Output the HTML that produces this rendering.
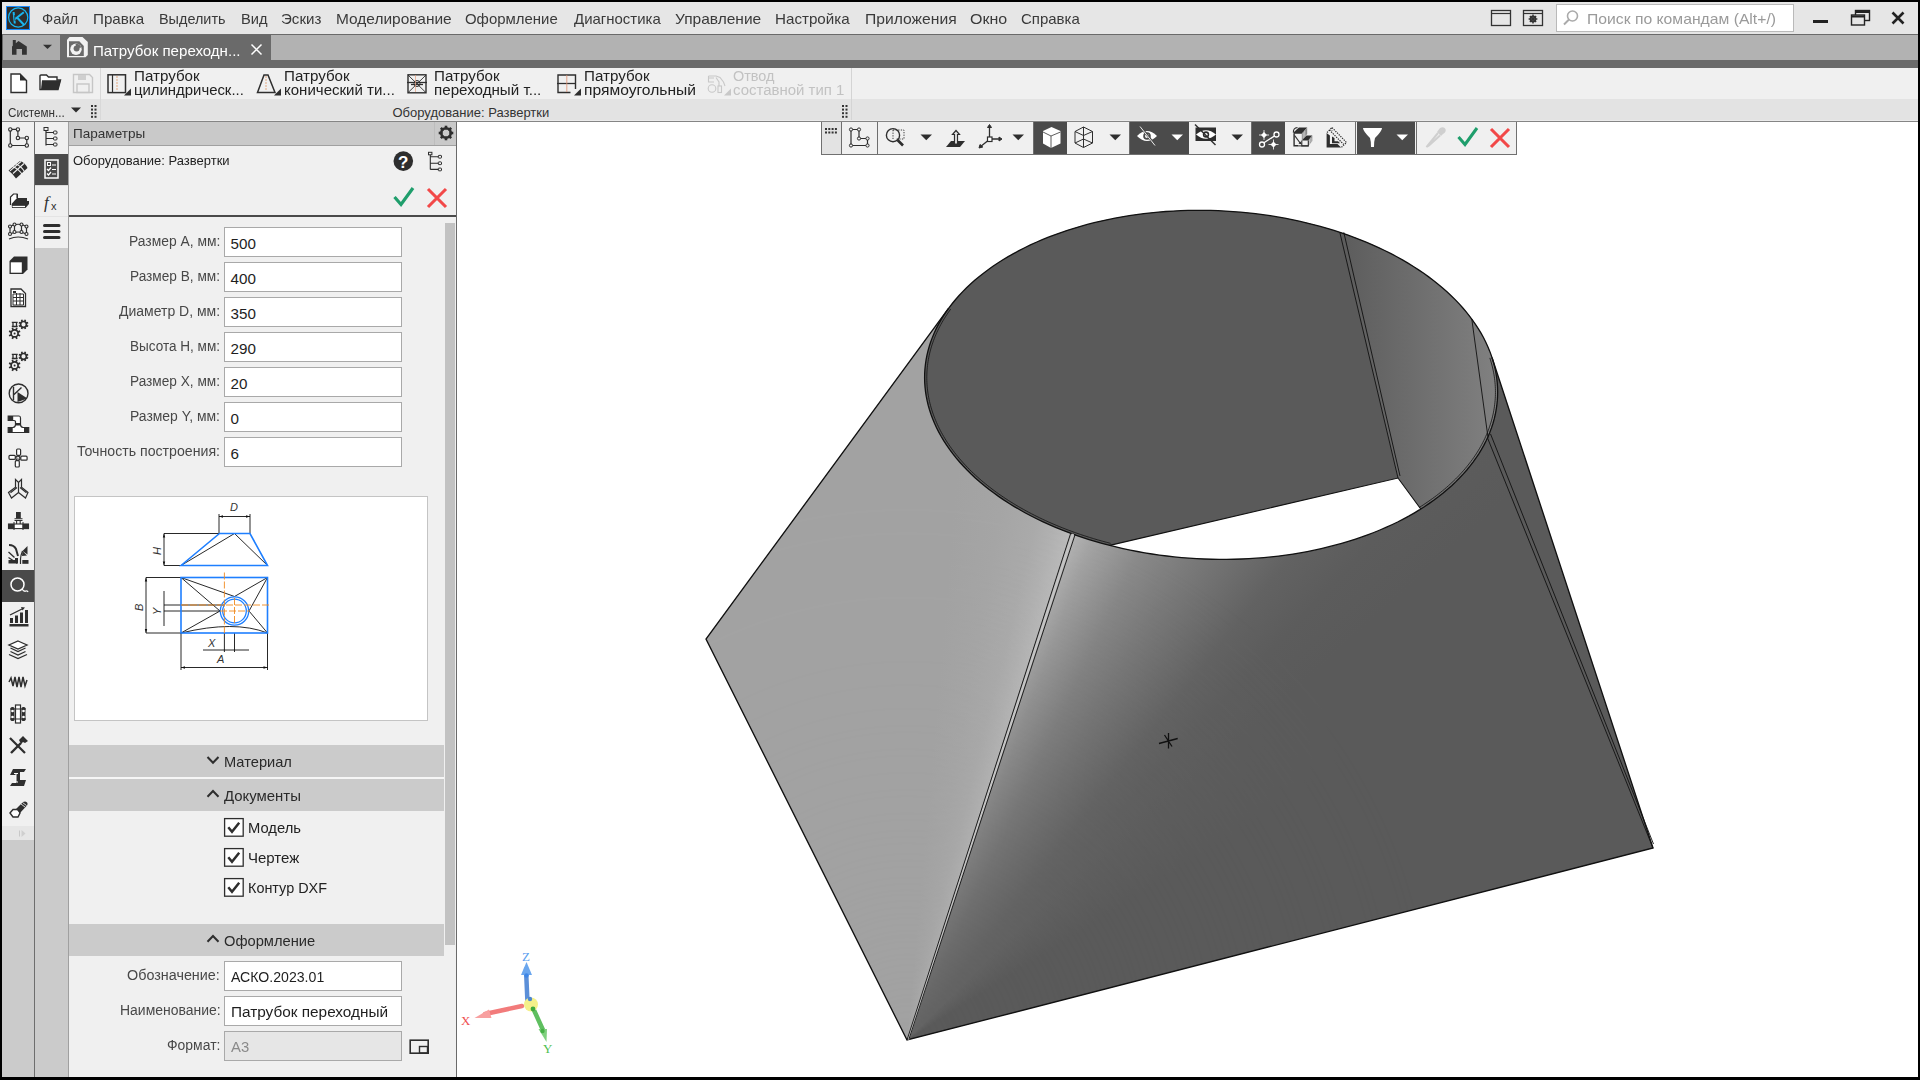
<!DOCTYPE html>
<html><head><meta charset="utf-8"><title>KOMPAS-3D</title>
<style>
html,body{margin:0;padding:0;width:1920px;height:1080px;overflow:hidden;background:#000;}
body{position:relative;font-family:"Liberation Sans",sans-serif;}
.t{position:absolute;white-space:nowrap;font-family:"Liberation Sans",sans-serif;}
svg{overflow:visible;}
</style></head><body>
<div style="position:absolute;left:0px;top:0px;width:1920px;height:1080px;background:#000;"></div>
<div style="position:absolute;left:2px;top:2px;width:1916px;height:32px;background:#e6e6e6;"></div>
<div style="position:absolute;left:2px;top:34px;width:1916px;height:34px;background:#6a6a6a;"></div>
<div style="position:absolute;left:3px;top:35px;width:57px;height:25px;background:#ababab;"></div>
<div style="position:absolute;left:271px;top:35px;width:1647px;height:25px;background:#b2b2b2;"></div>
<div style="position:absolute;left:2px;top:68px;width:1916px;height:31px;background:#f0f0f0;"></div>
<div style="position:absolute;left:2px;top:99px;width:1916px;height:22px;background:#e3e3e3;"></div>
<div style="position:absolute;left:2px;top:120px;width:1916px;height:1px;background:#ebebeb;"></div>
<div style="position:absolute;left:2px;top:121px;width:1916px;height:1px;background:#858585;"></div>
<div style="position:absolute;left:2px;top:122px;width:32px;height:704px;background:#f0f0f0;"></div>
<div style="position:absolute;left:2px;top:826px;width:32px;height:14px;background:#e6e6e6;"></div>
<div style="position:absolute;left:2px;top:840px;width:32px;height:237px;background:#cbcbcb;"></div>
<div style="position:absolute;left:2px;top:570px;width:32px;height:32px;background:#4a4a4a;"></div>
<div style="position:absolute;left:34px;top:122px;width:1px;height:955px;background:#6e6e6e;"></div>
<div style="position:absolute;left:35px;top:122px;width:33px;height:955px;background:#cbcbcb;"></div>
<div style="position:absolute;left:35px;top:122px;width:33px;height:126px;background:#f0f0f0;"></div>
<div style="position:absolute;left:35px;top:154px;width:33px;height:31px;background:#4a4a4a;"></div>
<div style="position:absolute;left:68px;top:122px;width:1px;height:955px;background:#a0a0a0;"></div>
<div style="position:absolute;left:69px;top:122px;width:387px;height:955px;background:#f0f0f0;"></div>
<div style="position:absolute;left:69px;top:122px;width:387px;height:23px;background:#c9c9c9;"></div>
<div style="position:absolute;left:69px;top:145px;width:387px;height:1px;background:#a0a0a0;"></div>
<div style="position:absolute;left:69px;top:216px;width:387px;height:1px;background:#555;"></div>
<div style="position:absolute;left:456px;top:122px;width:1px;height:955px;background:#6a6a6a;"></div>
<div style="position:absolute;left:457px;top:122px;width:1461px;height:955px;background:#ffffff;"></div>
<svg style="position:absolute;left:6px;top:6px;" width="24" height="24" viewBox="0 0 24 24"><rect x="0" y="0" width="24" height="24" fill="#1a8cff"/><rect x="1" y="1" width="22" height="22" fill="#2d2d2d"/><circle cx="12.2" cy="11.5" r="9.6" fill="none" stroke="#19b6f0" stroke-width="1.2"/><path d="M7.6 6 L8.8 17.5 M8.5 13.5 L17.8 6.2 M11 11.5 L18.2 19" stroke="#19b6f0" stroke-width="2" fill="none"/><path d="M8.3 9 L9 15" stroke="#2d2d2d" stroke-width="0.7"/></svg>
<div class="t" style="left:41.70px;top:11.52px;font-size:14.5px;line-height:14.5px;color:#3a3a3a;transform:scaleX(1.0155);transform-origin:0 0;">Файл</div>
<div class="t" style="left:92.50px;top:11.52px;font-size:14.5px;line-height:14.5px;color:#3a3a3a;transform:scaleX(1.0453);transform-origin:0 0;">Правка</div>
<div class="t" style="left:158.90px;top:11.52px;font-size:14.5px;line-height:14.5px;color:#3a3a3a;transform:scaleX(0.9941);transform-origin:0 0;">Выделить</div>
<div class="t" style="left:240.50px;top:11.52px;font-size:14.5px;line-height:14.5px;color:#3a3a3a;transform:scaleX(1.0102);transform-origin:0 0;">Вид</div>
<div class="t" style="left:280.90px;top:11.52px;font-size:14.5px;line-height:14.5px;color:#3a3a3a;transform:scaleX(1.0422);transform-origin:0 0;">Эскиз</div>
<div class="t" style="left:335.50px;top:11.52px;font-size:14.5px;line-height:14.5px;color:#3a3a3a;transform:scaleX(1.0664);transform-origin:0 0;">Моделирование</div>
<div class="t" style="left:465.20px;top:11.52px;font-size:14.5px;line-height:14.5px;color:#3a3a3a;transform:scaleX(1.0300);transform-origin:0 0;">Оформление</div>
<div class="t" style="left:574.00px;top:11.52px;font-size:14.5px;line-height:14.5px;color:#3a3a3a;transform:scaleX(1.0314);transform-origin:0 0;">Диагностика</div>
<div class="t" style="left:675.20px;top:11.52px;font-size:14.5px;line-height:14.5px;color:#3a3a3a;transform:scaleX(1.0694);transform-origin:0 0;">Управление</div>
<div class="t" style="left:775.40px;top:11.52px;font-size:14.5px;line-height:14.5px;color:#3a3a3a;transform:scaleX(1.0465);transform-origin:0 0;">Настройка</div>
<div class="t" style="left:864.70px;top:11.52px;font-size:14.5px;line-height:14.5px;color:#3a3a3a;transform:scaleX(1.0809);transform-origin:0 0;">Приложения</div>
<div class="t" style="left:970.10px;top:11.52px;font-size:14.5px;line-height:14.5px;color:#3a3a3a;transform:scaleX(1.1040);transform-origin:0 0;">Окно</div>
<div class="t" style="left:1020.80px;top:11.52px;font-size:14.5px;line-height:14.5px;color:#3a3a3a;transform:scaleX(1.0337);transform-origin:0 0;">Справка</div>
<svg style="position:absolute;left:1490px;top:9px;" width="22" height="18" viewBox="0 0 22 18"><rect x="1.5" y="1.5" width="19" height="15" fill="none" stroke="#333" stroke-width="1.3"/><line x1="1.5" y1="4.5" x2="20.5" y2="4.5" stroke="#333" stroke-width="1.2"/></svg>
<svg style="position:absolute;left:1522px;top:9px;" width="22" height="18" viewBox="0 0 22 18"><rect x="1.5" y="1.5" width="19" height="15" fill="none" stroke="#333" stroke-width="1.3"/><line x1="1.5" y1="4.5" x2="20.5" y2="4.5" stroke="#333" stroke-width="1.2"/><circle cx="11" cy="10" r="2.6" fill="none" stroke="#333" stroke-width="1.6"/><g stroke="#333" stroke-width="1.4"><line x1="11" y1="5.6" x2="11" y2="14.4"/><line x1="6.6" y1="10" x2="15.4" y2="10"/><line x1="7.9" y1="6.9" x2="14.1" y2="13.1"/><line x1="14.1" y1="6.9" x2="7.9" y2="13.1"/></g></svg>
<div style="position:absolute;left:1556px;top:4px;width:238px;height:28px;background:#ffffff;border:1px solid #b9b9b9;box-sizing:border-box;"></div>
<svg style="position:absolute;left:1562px;top:9px;" width="18" height="18" viewBox="0 0 18 18"><circle cx="10.5" cy="7" r="5" fill="none" stroke="#aaa" stroke-width="1.6"/><line x1="7" y1="10.5" x2="2" y2="15.5" stroke="#aaa" stroke-width="2"/></svg>
<div class="t" style="left:1587.00px;top:11.72px;font-size:14.5px;line-height:14.5px;color:#9a9a9a;transform:scaleX(1.0840);transform-origin:0 0;">Поиск по командам (Alt+/)</div>
<div style="position:absolute;left:1813px;top:20px;width:15px;height:3px;background:#222;"></div>
<svg style="position:absolute;left:1850px;top:9px;" width="22" height="18" viewBox="0 0 22 18"><rect x="5.5" y="1.5" width="14" height="10" fill="none" stroke="#222" stroke-width="1.4"/><line x1="5.5" y1="3" x2="19.5" y2="3" stroke="#222" stroke-width="2"/><rect x="1.5" y="6" width="13" height="10" fill="#e6e6e6" stroke="#222" stroke-width="1.4"/><line x1="1.5" y1="7.5" x2="14.5" y2="7.5" stroke="#222" stroke-width="2"/></svg>
<svg style="position:absolute;left:1890px;top:10px;" width="16" height="16" viewBox="0 0 16 16"><path d="M2.5 2.5 L13.5 13.5 M13.5 2.5 L2.5 13.5" stroke="#222" stroke-width="2.6"/></svg>
<svg style="position:absolute;left:0px;top:0px;" width="100" height="70" viewBox="0 0 100 70"><path d="M12 54.8 V46.5 L12.8 45.8 V40 H15.8 V43.2 L18.5 41 L26.8 46.5 V54.8 H22 V49 H16.5 V54.8 Z" fill="#333"/><path d="M43 44.8 H52 L47.5 48.9 Z" fill="#333"/><path d="M69.5 37 H82.5 L87.8 42 V55 L85.5 57.3 H67 V39.8 Z" fill="#f2f2f2"/><path d="M69 41.3 H79.3 L83.8 46 V56 H69 Z" fill="#6a6a6a"/><circle cx="76" cy="49.2" r="5.7" fill="#f2f2f2"/><circle cx="76.6" cy="48.4" r="3" fill="#6a6a6a"/><path d="M76.5 48.5 L75.5 43.8 A5.4 5.4 0 0 1 81.2 47.5 Z" fill="#6a6a6a"/></svg>
<div class="t" style="left:93.00px;top:43.52px;font-size:14.5px;line-height:14.5px;color:#ffffff;transform:scaleX(1.0389);transform-origin:0 0;">Патрубок переходн...</div>
<svg style="position:absolute;left:250px;top:43px;" width="13" height="13" viewBox="0 0 13 13"><path d="M1.5 1.5 L11.5 11.5 M11.5 1.5 L1.5 11.5" stroke="#fff" stroke-width="1.5"/></svg>
<div style="position:absolute;left:100px;top:68px;width:1px;height:52px;background:#d8d8d8;"></div>
<div style="position:absolute;left:851px;top:68px;width:1px;height:52px;background:#d4d4d4;"></div>
<svg style="position:absolute;left:10px;top:73px;" width="18" height="21" viewBox="0 0 18 21"><path d="M1 1 H10 L16.5 7.5 V19.5 H1 Z" fill="#fff" stroke="#2e2e2e" stroke-width="1.4"/><path d="M10 1 V7.5 H16.5 Z" fill="#2e2e2e"/></svg>
<svg style="position:absolute;left:39px;top:74px;" width="23" height="17" viewBox="0 0 23 17"><path d="M1 15.5 V2 Q1 1 2 1 H7.5 L9.5 3 H18 V6 H21.5 L19 15.5 Z" fill="#fff" stroke="#2e2e2e" stroke-width="1.4"/><path d="M2 15.5 L3 6.2 H21.8 L19.2 15.5 Z" fill="#2e2e2e"/></svg>
<svg style="position:absolute;left:72px;top:73px;" width="22" height="21" viewBox="0 0 22 21"><path d="M1.5 1.5 H17.5 L20.5 4.5 V19.5 H1.5 Z" fill="none" stroke="#c6c6c6" stroke-width="1.4"/><rect x="6" y="2" width="8" height="5" fill="#cfcfcf"/><rect x="5" y="11" width="12" height="8.5" fill="none" stroke="#c6c6c6" stroke-width="1.4"/></svg>
<svg style="position:absolute;left:106px;top:73px;" width="22" height="21" viewBox="0 0 22 21"><rect x="2" y="1.8" width="17.5" height="17.8" fill="none" stroke="#2e2e2e" stroke-width="1.5"/><line x1="6.5" y1="2" x2="6.5" y2="19.5" stroke="#2e2e2e" stroke-width="1.2"/><line x1="11" y1="3" x2="11" y2="18" stroke="#e08a50" stroke-width="0.7" stroke-dasharray="2 1"/></svg>
<svg style="position:absolute;left:123px;top:88px;" width="9" height="8" viewBox="0 0 9 8"><path d="M8 0.5 V7.5 H1 Z" fill="#2e2e2e"/></svg>
<div class="t" style="left:133.60px;top:68.95px;font-size:14px;line-height:14px;color:#222;transform:scaleX(1.0813);transform-origin:0 0;">Патрубок</div>
<div class="t" style="left:133.60px;top:82.75px;font-size:14px;line-height:14px;color:#222;transform:scaleX(1.0639);transform-origin:0 0;">цилиндрическ...</div>
<svg style="position:absolute;left:256px;top:73px;" width="22" height="21" viewBox="0 0 22 21"><path d="M8 2 H12 L19 19.5 H1.5 Z" fill="none" stroke="#2e2e2e" stroke-width="1.5"/><line x1="10" y1="3" x2="10" y2="18" stroke="#e08a50" stroke-width="0.7" stroke-dasharray="2 1"/></svg>
<svg style="position:absolute;left:273px;top:88px;" width="9" height="8" viewBox="0 0 9 8"><path d="M8 0.5 V7.5 H1 Z" fill="#2e2e2e"/></svg>
<div class="t" style="left:283.60px;top:68.95px;font-size:14px;line-height:14px;color:#222;transform:scaleX(1.0813);transform-origin:0 0;">Патрубок</div>
<div class="t" style="left:283.60px;top:82.75px;font-size:14px;line-height:14px;color:#222;transform:scaleX(1.0740);transform-origin:0 0;">конический ти...</div>
<svg style="position:absolute;left:406px;top:73px;" width="22" height="21" viewBox="0 0 22 21"><rect x="2" y="1.8" width="18" height="18" fill="none" stroke="#2e2e2e" stroke-width="1.4"/><path d="M2 2 L20 19.7 M20 2 L2 19.7" stroke="#2e2e2e" stroke-width="0.9"/><line x1="1" y1="9.5" x2="21" y2="9.5" stroke="#2e2e2e" stroke-width="1.3"/><line x1="5" y1="11.5" x2="17" y2="11.5" stroke="#2e2e2e" stroke-width="1.3"/><circle cx="11" cy="10.5" r="3" fill="none" stroke="#2e2e2e" stroke-width="1"/><line x1="9.5" y1="2" x2="9.5" y2="19" stroke="#e8a080" stroke-width="0.7"/></svg>
<div class="t" style="left:434.20px;top:68.95px;font-size:14px;line-height:14px;color:#222;transform:scaleX(1.0813);transform-origin:0 0;">Патрубок</div>
<div class="t" style="left:434.20px;top:82.75px;font-size:14px;line-height:14px;color:#222;transform:scaleX(1.0821);transform-origin:0 0;">переходный т...</div>
<svg style="position:absolute;left:556px;top:73px;" width="22" height="21" viewBox="0 0 22 21"><path d="M19.5 16 V2 H2 V19.5 H14.5" fill="none" stroke="#2e2e2e" stroke-width="1.4"/><line x1="1" y1="10.5" x2="20" y2="10.5" stroke="#2e2e2e" stroke-width="1.3"/><line x1="10.8" y1="2" x2="10.8" y2="19" stroke="#e09070" stroke-width="0.8"/></svg>
<svg style="position:absolute;left:573px;top:88px;" width="9" height="8" viewBox="0 0 9 8"><path d="M8 0.5 V7.5 H1 Z" fill="#2e2e2e"/></svg>
<div class="t" style="left:583.60px;top:68.95px;font-size:14px;line-height:14px;color:#222;transform:scaleX(1.0813);transform-origin:0 0;">Патрубок</div>
<div class="t" style="left:583.60px;top:82.75px;font-size:14px;line-height:14px;color:#222;transform:scaleX(1.1155);transform-origin:0 0;">прямоугольный</div>
<svg style="position:absolute;left:706px;top:73px;" width="22" height="21" viewBox="0 0 22 21"><path d="M2.5 3 H10 L14 4.5 L17.5 9 L19 13 M2 5 H8 M2.5 3 V9 H8 M10 4.5 L13 9 V13" fill="none" stroke="#c8c8c8" stroke-width="1.1"/><circle cx="6" cy="15.5" r="3.8" fill="none" stroke="#c8c8c8" stroke-width="1.1"/><rect x="12" y="13" width="3.5" height="6.5" fill="none" stroke="#c8c8c8" stroke-width="1.1"/></svg>
<svg style="position:absolute;left:723px;top:88px;" width="9" height="8" viewBox="0 0 9 8"><path d="M8 0.5 V7.5 H1 Z" fill="#c8c8c8"/></svg>
<div class="t" style="left:732.90px;top:68.95px;font-size:14px;line-height:14px;color:#c2c2c2;transform:scaleX(1.0316);transform-origin:0 0;">Отвод</div>
<div class="t" style="left:732.90px;top:82.75px;font-size:14px;line-height:14px;color:#c2c2c2;transform:scaleX(1.0697);transform-origin:0 0;">составной тип 1</div>
<div class="t" style="left:7.70px;top:105.79px;font-size:13px;line-height:13px;color:#333;transform:scaleX(0.8996);transform-origin:0 0;">Системн...</div>
<svg style="position:absolute;left:70px;top:107px;" width="12" height="7" viewBox="0 0 12 7"><path d="M1 0.5 H11 L6 5.5 Z" fill="#2e2e2e"/></svg>
<svg style="position:absolute;left:91px;top:103.5px;" width="6" height="16" viewBox="0 0 6 16"><rect x="0" y="1.0" width="2" height="2" fill="#333"/><rect x="3.5" y="1.0" width="2" height="2" fill="#333"/><rect x="0" y="4.6" width="2" height="2" fill="#333"/><rect x="3.5" y="4.6" width="2" height="2" fill="#333"/><rect x="0" y="8.2" width="2" height="2" fill="#333"/><rect x="3.5" y="8.2" width="2" height="2" fill="#333"/><rect x="0" y="11.8" width="2" height="2" fill="#333"/><rect x="3.5" y="11.8" width="2" height="2" fill="#333"/></svg>
<div class="t" style="left:392.50px;top:105.79px;font-size:13px;line-height:13px;color:#333;">Оборудование: Развертки</div>
<svg style="position:absolute;left:842px;top:103.5px;" width="6" height="16" viewBox="0 0 6 16"><rect x="0" y="1.0" width="2" height="2" fill="#333"/><rect x="3.5" y="1.0" width="2" height="2" fill="#333"/><rect x="0" y="4.6" width="2" height="2" fill="#333"/><rect x="3.5" y="4.6" width="2" height="2" fill="#333"/><rect x="0" y="8.2" width="2" height="2" fill="#333"/><rect x="3.5" y="8.2" width="2" height="2" fill="#333"/><rect x="0" y="11.8" width="2" height="2" fill="#333"/><rect x="3.5" y="11.8" width="2" height="2" fill="#333"/></svg>
<svg style="position:absolute;left:2px;top:122px;" width="32" height="32" viewBox="0 0 32 32"><path d="M8.3 7.4 H15.9 V16 H24.8 V23.5 H8.3 Z" fill="none" stroke="#2e2e2e" stroke-width="1.2"/><circle cx="8.3" cy="7.4" r="1.7" fill="#f0f0f0" stroke="#2e2e2e" stroke-width="1.1"/><circle cx="15.9" cy="7.4" r="1.7" fill="#f0f0f0" stroke="#2e2e2e" stroke-width="1.1"/><circle cx="15.9" cy="16" r="1.7" fill="#f0f0f0" stroke="#2e2e2e" stroke-width="1.1"/><circle cx="24.8" cy="16" r="1.7" fill="#f0f0f0" stroke="#2e2e2e" stroke-width="1.1"/><circle cx="24.8" cy="23.5" r="1.7" fill="#f0f0f0" stroke="#2e2e2e" stroke-width="1.1"/><circle cx="8.3" cy="23.5" r="1.7" fill="#f0f0f0" stroke="#2e2e2e" stroke-width="1.1"/></svg>
<svg style="position:absolute;left:2px;top:154px;" width="32" height="32" viewBox="0 0 32 32"><path d="M6.5 16.5 L18 7 Q23 8.5 25.5 14 L14 24.5 Q11 20 6.5 16.5 Z" fill="#2e2e2e"/><path d="M10.5 12.5 Q17 15 20.5 21 M13.5 9.7 Q20 12.5 23 18.5 M11 19.5 L22 9.5 M8 16.8 L19 7.5" stroke="#f0f0f0" stroke-width="1.1" fill="none"/></svg>
<svg style="position:absolute;left:2px;top:186px;" width="32" height="32" viewBox="0 0 32 32"><path d="M9 11 L12 8 H16 V12 H25 V15 H27 V18 L23.5 22 H10 Z" fill="#2e2e2e"/><path d="M8.5 19 V11 L11.5 8 H15 V12" fill="#fff" stroke="#2e2e2e" stroke-width="1.2"/><path d="M10.5 20.5 H23" stroke="#fff" stroke-width="1.3"/></svg>
<svg style="position:absolute;left:2px;top:218px;" width="32" height="32" viewBox="0 0 32 32"><path d="M8 8.5 Q16 4 24.5 8.5 M8 8.5 V16 M24.5 8.5 V16 M12.5 6.5 V14 M19.5 6.5 V14 M8 16 Q16 12 24.5 16 M7 21 Q16 17 26 21" fill="none" stroke="#2e2e2e" stroke-width="1.2"/><circle cx="8" cy="8.5" r="1.5" fill="#f0f0f0" stroke="#2e2e2e" stroke-width="1.1"/><circle cx="12.5" cy="6.5" r="1.5" fill="#f0f0f0" stroke="#2e2e2e" stroke-width="1.1"/><circle cx="19.5" cy="6.5" r="1.5" fill="#f0f0f0" stroke="#2e2e2e" stroke-width="1.1"/><circle cx="24.5" cy="8.5" r="1.5" fill="#f0f0f0" stroke="#2e2e2e" stroke-width="1.1"/><circle cx="8" cy="16" r="1.5" fill="#f0f0f0" stroke="#2e2e2e" stroke-width="1.1"/><circle cx="24.5" cy="16" r="1.5" fill="#f0f0f0" stroke="#2e2e2e" stroke-width="1.1"/><circle cx="12.5" cy="14" r="1.5" fill="#f0f0f0" stroke="#2e2e2e" stroke-width="1.1"/><circle cx="19.5" cy="14" r="1.5" fill="#f0f0f0" stroke="#2e2e2e" stroke-width="1.1"/></svg>
<svg style="position:absolute;left:2px;top:250px;" width="32" height="32" viewBox="0 0 32 32"><path d="M7.5 11 L12 6.5 H25.5 V19.5 L21 24 H7.5 Z" fill="#2e2e2e"/><rect x="8.8" y="12.3" width="11" height="10.4" fill="#fff"/></svg>
<svg style="position:absolute;left:2px;top:282px;" width="32" height="32" viewBox="0 0 32 32"><path d="M9 7 H19 L23.5 11.5 V24.5 H9 Z" fill="#fff" stroke="#2e2e2e" stroke-width="1.3"/><rect x="11" y="9" width="3" height="2" fill="#2e2e2e"/><path d="M11 12 H21.5 V23 H11 Z M11 15.5 H21.5 M11 19 H21.5 M14.5 11 V23 M18 11 V23" fill="none" stroke="#2e2e2e" stroke-width="1"/></svg>
<svg style="position:absolute;left:2px;top:314px;" width="32" height="32" viewBox="0 0 32 32"><path d="M9.8 8.3 H15.7 M9.8 12.5 H15.7 M11 8.3 V12.5 M14.5 8.3 V12.5" stroke="#2e2e2e" stroke-width="1.3"/><line x1="24.04" y1="11.45" x2="26.12" y2="12.31" stroke="#2e2e2e" stroke-width="1.7"/><line x1="22.55" y1="12.94" x2="23.41" y2="15.02" stroke="#2e2e2e" stroke-width="1.7"/><line x1="20.45" y1="12.94" x2="19.59" y2="15.02" stroke="#2e2e2e" stroke-width="1.7"/><line x1="18.96" y1="11.45" x2="16.88" y2="12.31" stroke="#2e2e2e" stroke-width="1.7"/><line x1="18.96" y1="9.35" x2="16.88" y2="8.49" stroke="#2e2e2e" stroke-width="1.7"/><line x1="20.45" y1="7.86" x2="19.59" y2="5.78" stroke="#2e2e2e" stroke-width="1.7"/><line x1="22.55" y1="7.86" x2="23.41" y2="5.78" stroke="#2e2e2e" stroke-width="1.7"/><line x1="24.04" y1="9.35" x2="26.12" y2="8.49" stroke="#2e2e2e" stroke-width="1.7"/><circle cx="21.5" cy="10.4" r="2.90" fill="#f0f0f0" stroke="#2e2e2e" stroke-width="1.7"/><line x1="15.65" y1="20.66" x2="18.14" y2="21.70" stroke="#2e2e2e" stroke-width="1.7"/><line x1="13.86" y1="22.45" x2="14.90" y2="24.94" stroke="#2e2e2e" stroke-width="1.7"/><line x1="11.34" y1="22.45" x2="10.30" y2="24.94" stroke="#2e2e2e" stroke-width="1.7"/><line x1="9.55" y1="20.66" x2="7.06" y2="21.70" stroke="#2e2e2e" stroke-width="1.7"/><line x1="9.55" y1="18.14" x2="7.06" y2="17.10" stroke="#2e2e2e" stroke-width="1.7"/><line x1="11.34" y1="16.35" x2="10.30" y2="13.86" stroke="#2e2e2e" stroke-width="1.7"/><line x1="13.86" y1="16.35" x2="14.90" y2="13.86" stroke="#2e2e2e" stroke-width="1.7"/><line x1="15.65" y1="18.14" x2="18.14" y2="17.10" stroke="#2e2e2e" stroke-width="1.7"/><circle cx="12.6" cy="19.4" r="3.48" fill="#f0f0f0" stroke="#2e2e2e" stroke-width="1.7"/><circle cx="12.6" cy="19.4" r="1" fill="#2e2e2e"/></svg>
<svg style="position:absolute;left:2px;top:346px;" width="32" height="32" viewBox="0 0 32 32"><path d="M9.8 8.3 H15.7 M9.8 12.5 H15.7 M11 8.3 V12.5 M14.5 8.3 V12.5" stroke="#2e2e2e" stroke-width="1.3"/><line x1="24.04" y1="11.45" x2="26.12" y2="12.31" stroke="#2e2e2e" stroke-width="1.7"/><line x1="22.55" y1="12.94" x2="23.41" y2="15.02" stroke="#2e2e2e" stroke-width="1.7"/><line x1="20.45" y1="12.94" x2="19.59" y2="15.02" stroke="#2e2e2e" stroke-width="1.7"/><line x1="18.96" y1="11.45" x2="16.88" y2="12.31" stroke="#2e2e2e" stroke-width="1.7"/><line x1="18.96" y1="9.35" x2="16.88" y2="8.49" stroke="#2e2e2e" stroke-width="1.7"/><line x1="20.45" y1="7.86" x2="19.59" y2="5.78" stroke="#2e2e2e" stroke-width="1.7"/><line x1="22.55" y1="7.86" x2="23.41" y2="5.78" stroke="#2e2e2e" stroke-width="1.7"/><line x1="24.04" y1="9.35" x2="26.12" y2="8.49" stroke="#2e2e2e" stroke-width="1.7"/><circle cx="21.5" cy="10.4" r="2.90" fill="#f0f0f0" stroke="#2e2e2e" stroke-width="1.7"/><line x1="15.65" y1="20.66" x2="18.14" y2="21.70" stroke="#2e2e2e" stroke-width="1.7"/><line x1="13.86" y1="22.45" x2="14.90" y2="24.94" stroke="#2e2e2e" stroke-width="1.7"/><line x1="11.34" y1="22.45" x2="10.30" y2="24.94" stroke="#2e2e2e" stroke-width="1.7"/><line x1="9.55" y1="20.66" x2="7.06" y2="21.70" stroke="#2e2e2e" stroke-width="1.7"/><line x1="9.55" y1="18.14" x2="7.06" y2="17.10" stroke="#2e2e2e" stroke-width="1.7"/><line x1="11.34" y1="16.35" x2="10.30" y2="13.86" stroke="#2e2e2e" stroke-width="1.7"/><line x1="13.86" y1="16.35" x2="14.90" y2="13.86" stroke="#2e2e2e" stroke-width="1.7"/><line x1="15.65" y1="18.14" x2="18.14" y2="17.10" stroke="#2e2e2e" stroke-width="1.7"/><circle cx="12.6" cy="19.4" r="3.48" fill="#f0f0f0" stroke="#2e2e2e" stroke-width="1.7"/><circle cx="12.6" cy="19.4" r="1" fill="#2e2e2e"/></svg>
<svg style="position:absolute;left:2px;top:378px;" width="32" height="32" viewBox="0 0 32 32"><circle cx="16.6" cy="15.4" r="9.4" fill="none" stroke="#2e2e2e" stroke-width="1.4"/><path d="M11.5 9 V22 M11.5 17 L19.5 9.5" stroke="#2e2e2e" stroke-width="1.4" fill="none"/><path d="M15.5 14 L25.5 20.5 L15.5 24 Z" fill="#2e2e2e"/></svg>
<svg style="position:absolute;left:2px;top:410px;" width="32" height="32" viewBox="0 0 32 32"><path d="M6.2 6 H17 Q18.5 6 18.5 8 V14.5 Q18.5 17 21 17.5 H26.7 V22.5 H6.2 V17.5 H11 Q13.5 17 13.5 14.5 V11.5 Q13.5 10.5 12 10.5 H6.2 Z" fill="#fff" stroke="#2e2e2e" stroke-width="1.2"/><rect x="6.2" y="6" width="5" height="4.5" fill="#2e2e2e"/><rect x="6.2" y="17.5" width="4.5" height="5" fill="#2e2e2e"/><rect x="22" y="17.5" width="4.7" height="5" fill="#2e2e2e"/><rect x="13.5" y="13" width="5" height="2.5" fill="#2e2e2e"/></svg>
<svg style="position:absolute;left:2px;top:442px;" width="32" height="32" viewBox="0 0 32 32"><g fill="#fff" stroke="#2e2e2e" stroke-width="1.2"><rect x="14.6" y="7" width="4" height="6.3" rx="1"/><rect x="7" y="13.3" width="6.3" height="4" rx="1"/><rect x="18.8" y="14.2" width="6.3" height="4" rx="1"/><rect x="13.3" y="18.7" width="4" height="6.3" rx="1"/><circle cx="15.9" cy="16.2" r="2"/></g><circle cx="15.9" cy="16.2" r="0.6" fill="#2e2e2e"/></svg>
<svg style="position:absolute;left:2px;top:474px;" width="32" height="32" viewBox="0 0 32 32"><g fill="none" stroke="#2e2e2e" stroke-width="1.2"><path d="M13.5 5.5 V13.3 L6.5 18.5 L9.5 24 L16.5 18.5 L23.5 24 L26 18.5 L19.5 13.3 V5.5 L16.5 8.5 Z"/><path d="M16.5 8.5 V18.5 M15 13.5 L8.5 18.8 M18 13.5 L24.5 18.8"/></g></svg>
<svg style="position:absolute;left:2px;top:506px;" width="32" height="32" viewBox="0 0 32 32"><rect x="14" y="6" width="4.8" height="6.5" fill="#2e2e2e"/><path d="M12.5 12.8 H20.5 M12.5 14.5 H20.5" stroke="#2e2e2e" stroke-width="1.1"/><path d="M14.6 14.5 V18 M18.2 14.5 V18" stroke="#2e2e2e" stroke-width="1.1"/><rect x="6.5" y="18" width="20" height="4.6" fill="#fff" stroke="#2e2e2e" stroke-width="1.1"/><rect x="6.5" y="18" width="6" height="4.6" fill="#2e2e2e"/><rect x="20.5" y="18" width="6" height="4.6" fill="#2e2e2e"/><path d="M12 16 V24 M21 16 V24" stroke="#2e2e2e" stroke-width="1"/></svg>
<svg style="position:absolute;left:2px;top:538px;" width="32" height="32" viewBox="0 0 32 32"><path d="M7 7 Q12 7 14 11 L16 18" stroke="#2e2e2e" stroke-width="2" fill="none"/><path d="M6.5 14 L12.5 19.5 M6.5 19.5 L15.5 25.5" stroke="#2e2e2e" stroke-width="1.3"/><path d="M6.5 22 H13 L15.5 25.5 H6.5 Z" fill="#2e2e2e"/><path d="M25.5 8 V16.5 L20.5 13 Z" fill="#2e2e2e"/><path d="M20.5 13 L25 17.5 L20 18 Z" fill="#2e2e2e"/><rect x="20.3" y="22" width="6.2" height="3.8" fill="#2e2e2e"/><path d="M18.5 26 V21 Q18.5 18 20.5 13" stroke="#2e2e2e" stroke-width="1.2" fill="none"/><rect x="13" y="20" width="3" height="5" fill="#2e2e2e"/></svg>
<svg style="position:absolute;left:2px;top:570px;" width="32" height="32" viewBox="0 0 32 32"><circle cx="15.5" cy="14.5" r="6.5" fill="none" stroke="#fff" stroke-width="1.5"/><path d="M20 19 Q22 22 24 21 Q25.5 20.5 26 22" stroke="#fff" stroke-width="1.3" fill="none"/></svg>
<svg style="position:absolute;left:2px;top:602px;" width="32" height="32" viewBox="0 0 32 32"><path d="M8 16 V21 H11 V16 Z M13 13.5 V21 H16 V13.5 Z M18 10.5 V21 H21 V10.5 Z M23 8 V21 H26 V8 Z" fill="#2e2e2e"/><rect x="7.5" y="22" width="19" height="2.5" fill="#2e2e2e"/><path d="M8 13 L21 6.5" stroke="#2e2e2e" stroke-width="1.3"/><path d="M19 5 L23 5.5 L20.5 8.5 Z" fill="#2e2e2e"/></svg>
<svg style="position:absolute;left:2px;top:634px;" width="32" height="32" viewBox="0 0 32 32"><path d="M16 7 L25 11 L16 15 L7 11 Z" fill="#fff" stroke="#2e2e2e" stroke-width="1.3"/><path d="M8.5 14 L16 17.5 L23.5 14 M8.5 17.5 L16 21 L23.5 17.5 M7 20.5 L16 24.5 L25 20.5" fill="none" stroke="#2e2e2e" stroke-width="1.3"/></svg>
<svg style="position:absolute;left:2px;top:666px;" width="32" height="32" viewBox="0 0 32 32"><path d="M7 16 L9 12 L11 20 L13 11 L15 21 L17 11 L19 21 L21 11 L23 20 L25 14" fill="none" stroke="#2e2e2e" stroke-width="1.5"/></svg>
<svg style="position:absolute;left:2px;top:698px;" width="32" height="32" viewBox="0 0 32 32"><path d="M9 8 H23 V24 H9 Z" fill="none" stroke="#2e2e2e" stroke-width="0"/><rect x="8.5" y="9" width="4" height="14" rx="1.5" fill="#2e2e2e"/><rect x="19.5" y="9" width="4" height="14" rx="1.5" fill="#2e2e2e"/><rect x="13.5" y="7" width="5" height="18" fill="#fff" stroke="#2e2e2e" stroke-width="1.2"/><circle cx="10.5" cy="13" r="1.3" fill="#fff"/><circle cx="10.5" cy="19" r="1.3" fill="#fff"/><circle cx="21.5" cy="13" r="1.3" fill="#fff"/><circle cx="21.5" cy="19" r="1.3" fill="#fff"/><path d="M8 11 H24 M8 21 H24" stroke="#2e2e2e" stroke-width="1.2"/></svg>
<svg style="position:absolute;left:2px;top:730px;" width="32" height="32" viewBox="0 0 32 32"><path d="M8 8 L23 23" stroke="#2e2e2e" stroke-width="2.2"/><path d="M9 23 L19 13" stroke="#2e2e2e" stroke-width="2.4"/><path d="M17 10 L21 6 L26 11 L23 13 L21 12 L19 14 Z" fill="#2e2e2e"/></svg>
<svg style="position:absolute;left:2px;top:762px;" width="32" height="32" viewBox="0 0 32 32"><path d="M11 7 H24 L22 10 H18 V18 H24 L22 24 H8 L10 21 H14 V13 H8 Z" fill="#2e2e2e"/><path d="M12 11.5 H16 M12 20 H16 M14 11.5 V20" stroke="#fff" stroke-width="1"/></svg>
<svg style="position:absolute;left:2px;top:794px;" width="32" height="32" viewBox="0 0 32 32"><path d="M8 19 L11 15.5 H16 L18 19 L16 23 H11 Z" fill="#fff" stroke="#2e2e2e" stroke-width="1.4"/><path d="M14 15 L21 8 Q24 6.5 25.5 9 Q26 11 24 12.5 L18 19" fill="#2e2e2e"/><path d="M19 10 L23 13 M20.5 8.5 L24.5 11.5" stroke="#fff" stroke-width="0.8"/></svg>
<svg style="position:absolute;left:18px;top:829px;" width="10" height="10" viewBox="0 0 10 10"><rect x="1" y="1.5" width="1" height="6" fill="#c8c8c8"/><path d="M3.5 1 L7.5 4.5 L3.5 8 Z" fill="#cfcfcf"/></svg>
<svg style="position:absolute;left:35px;top:122px;" width="33" height="32" viewBox="0 0 33 32"><path d="M11 6.5 V23.5 M11 10.5 H19 M11 16.5 H19 M11 22.5 H19" stroke="#2e2e2e" stroke-width="1.2" fill="none"/><rect x="9" y="5.5" width="4" height="3" fill="#f0f0f0" stroke="#2e2e2e" stroke-width="1"/><rect x="18.5" y="9" width="3.5" height="3" rx="1" fill="#f0f0f0" stroke="#2e2e2e" stroke-width="1"/><rect x="18.5" y="15" width="3.5" height="3" rx="1" fill="#f0f0f0" stroke="#2e2e2e" stroke-width="1"/><rect x="18.5" y="21" width="3.5" height="3" rx="1" fill="#f0f0f0" stroke="#2e2e2e" stroke-width="1"/></svg>
<svg style="position:absolute;left:35px;top:154px;" width="33" height="32" viewBox="0 0 33 32"><rect x="10" y="6" width="13" height="18" fill="none" stroke="#fff" stroke-width="1.5"/><rect x="12.5" y="8.5" width="3" height="3" fill="none" stroke="#fff" stroke-width="1"/><path d="M17 11 H21 M17 15.5 H21 M17 20 H21" stroke="#fff" stroke-width="1"/><path d="M12 15 L13.5 16.5 L16 13.5 M12 19.5 L13.5 21 L16 18" stroke="#fff" stroke-width="1.2" fill="none"/></svg>
<svg style="position:absolute;left:35px;top:186px;" width="33" height="32" viewBox="0 0 33 32"><text x="9" y="22" font-family="Liberation Serif" font-style="italic" font-size="17" fill="#2e2e2e">f</text><text x="16" y="24" font-family="Liberation Sans" font-size="11" fill="#2e2e2e">x</text></svg>
<svg style="position:absolute;left:35px;top:218px;" width="33" height="32" viewBox="0 0 33 32"><path d="M9.5 6.5 H24 M9.5 12.5 H24 M9.5 18.5 H24" stroke="#2e2e2e" stroke-width="3" stroke-linecap="round" transform="translate(0,1)"/></svg>
<div style="position:absolute;left:35px;top:185px;width:33px;height:1px;background:#dcdcdc;"></div>
<div style="position:absolute;left:35px;top:216px;width:33px;height:1px;background:#e4e4e4;"></div>
<div style="position:absolute;left:434px;top:122px;width:1px;height:23px;background:#bdbdbd;"></div>
<div class="t" style="left:73.20px;top:126.87px;font-size:13.5px;line-height:13.5px;color:#333;transform:scaleX(1.0033);transform-origin:0 0;">Параметры</div>
<svg style="position:absolute;left:435.6px;top:123.3px;" width="20" height="20" viewBox="0 0 20 20"><line x1="13.50" y1="10.00" x2="17.30" y2="10.00" stroke="#2e2e2e" stroke-width="2.6"/><line x1="12.47" y1="12.47" x2="15.16" y2="15.16" stroke="#2e2e2e" stroke-width="2.6"/><line x1="10.00" y1="13.50" x2="10.00" y2="17.30" stroke="#2e2e2e" stroke-width="2.6"/><line x1="7.53" y1="12.47" x2="4.84" y2="15.16" stroke="#2e2e2e" stroke-width="2.6"/><line x1="6.50" y1="10.00" x2="2.70" y2="10.00" stroke="#2e2e2e" stroke-width="2.6"/><line x1="7.53" y1="7.53" x2="4.84" y2="4.84" stroke="#2e2e2e" stroke-width="2.6"/><line x1="10.00" y1="6.50" x2="10.00" y2="2.70" stroke="#2e2e2e" stroke-width="2.6"/><line x1="12.47" y1="7.53" x2="15.16" y2="4.84" stroke="#2e2e2e" stroke-width="2.6"/><circle cx="10" cy="10" r="4.8" fill="none" stroke="#2e2e2e" stroke-width="2.6"/></svg>
<div class="t" style="left:73.20px;top:153.57px;font-size:13.5px;line-height:13.5px;color:#222;transform:scaleX(0.9620);transform-origin:0 0;">Оборудование: Развертки</div>
<svg style="position:absolute;left:393px;top:151px;" width="21" height="21" viewBox="0 0 21 21"><circle cx="10.3" cy="10.1" r="9.8" fill="#2e2e2e"/><text x="10.3" y="16.5" text-anchor="middle" font-family="Liberation Sans" font-weight="bold" font-size="17" fill="#fff">?</text></svg>
<svg style="position:absolute;left:426px;top:150px;" width="18" height="22" viewBox="0 0 18 22"><path d="M4.3 4 V19.5 M4.3 6.7 H13 M4.3 13.2 H13 M4.3 19.4 H13" stroke="#2e2e2e" stroke-width="1.1" fill="none"/><rect x="2.5" y="2.3" width="3.4" height="2.5" fill="#f0f0f0" stroke="#2e2e2e" stroke-width="1"/><rect x="12.3" y="5.4" width="3.2" height="2.7" rx="0.6" fill="#f0f0f0" stroke="#2e2e2e" stroke-width="1"/><rect x="12.3" y="11.9" width="3.2" height="2.7" rx="0.6" fill="#f0f0f0" stroke="#2e2e2e" stroke-width="1"/><rect x="12.3" y="18.1" width="3.2" height="2.7" rx="0.6" fill="#f0f0f0" stroke="#2e2e2e" stroke-width="1"/></svg>
<svg style="position:absolute;left:391.5px;top:185px;" width="24" height="24" viewBox="0 0 24 24"><path d="M2.5 12 L9 19.5 L21 3" stroke="#1f9e6c" stroke-width="3.2" fill="none" stroke-linejoin="miter"/></svg>
<svg style="position:absolute;left:426px;top:187px;" width="22" height="22" viewBox="0 0 22 22"><path d="M2 2 L20 20 M20 2 L2 20" stroke="#f24848" stroke-width="3.1" stroke-linecap="butt"/></svg>
<div style="position:absolute;left:69px;top:215px;width:387px;height:2px;background:#4a4a4a;"></div>
<div style="position:absolute;left:445px;top:223px;width:10px;height:722px;background:#c2c2c2;"></div>
<div style="position:absolute;left:224px;top:227px;width:178px;height:30px;background:#fff;border:1px solid #a9a9a9;box-sizing:border-box;"></div>
<div class="t" style="left:128.70px;top:233.25px;font-size:15.3px;line-height:15.3px;color:#484848;transform:scaleX(0.9055);transform-origin:0 0;">Размер А, мм:</div>
<div class="t" style="left:230.60px;top:236.03px;font-size:15.2px;line-height:15.2px;color:#1e1e1e;">500</div>
<div style="position:absolute;left:224px;top:262px;width:178px;height:30px;background:#fff;border:1px solid #a9a9a9;box-sizing:border-box;"></div>
<div class="t" style="left:130.00px;top:268.25px;font-size:15.3px;line-height:15.3px;color:#484848;transform:scaleX(0.8926);transform-origin:0 0;">Размер В, мм:</div>
<div class="t" style="left:230.60px;top:271.03px;font-size:15.2px;line-height:15.2px;color:#1e1e1e;">400</div>
<div style="position:absolute;left:224px;top:297px;width:178px;height:30px;background:#fff;border:1px solid #a9a9a9;box-sizing:border-box;"></div>
<div class="t" style="left:118.90px;top:303.25px;font-size:15.3px;line-height:15.3px;color:#484848;transform:scaleX(0.9146);transform-origin:0 0;">Диаметр D, мм:</div>
<div class="t" style="left:230.60px;top:306.03px;font-size:15.2px;line-height:15.2px;color:#1e1e1e;">350</div>
<div style="position:absolute;left:224px;top:332px;width:178px;height:30px;background:#fff;border:1px solid #a9a9a9;box-sizing:border-box;"></div>
<div class="t" style="left:130.00px;top:338.25px;font-size:15.3px;line-height:15.3px;color:#484848;transform:scaleX(0.8856);transform-origin:0 0;">Высота H, мм:</div>
<div class="t" style="left:230.60px;top:341.03px;font-size:15.2px;line-height:15.2px;color:#1e1e1e;">290</div>
<div style="position:absolute;left:224px;top:367px;width:178px;height:30px;background:#fff;border:1px solid #a9a9a9;box-sizing:border-box;"></div>
<div class="t" style="left:130.00px;top:373.25px;font-size:15.3px;line-height:15.3px;color:#484848;transform:scaleX(0.8926);transform-origin:0 0;">Размер X, мм:</div>
<div class="t" style="left:230.60px;top:376.03px;font-size:15.2px;line-height:15.2px;color:#1e1e1e;">20</div>
<div style="position:absolute;left:224px;top:402px;width:178px;height:30px;background:#fff;border:1px solid #a9a9a9;box-sizing:border-box;"></div>
<div class="t" style="left:130.00px;top:408.25px;font-size:15.3px;line-height:15.3px;color:#484848;transform:scaleX(0.9104);transform-origin:0 0;">Размер Y, мм:</div>
<div class="t" style="left:230.60px;top:411.03px;font-size:15.2px;line-height:15.2px;color:#1e1e1e;">0</div>
<div style="position:absolute;left:224px;top:437px;width:178px;height:30px;background:#fff;border:1px solid #a9a9a9;box-sizing:border-box;"></div>
<div class="t" style="left:77.00px;top:443.25px;font-size:15.3px;line-height:15.3px;color:#484848;transform:scaleX(0.9247);transform-origin:0 0;">Точность построения:</div>
<div class="t" style="left:230.60px;top:446.03px;font-size:15.2px;line-height:15.2px;color:#1e1e1e;">6</div>
<div style="position:absolute;left:74px;top:496px;width:354px;height:225px;background:#fff;border:1px solid #c4c4c4;box-sizing:border-box;"></div>
<svg style="position:absolute;left:0px;top:0px;" width="460" height="700" viewBox="0 0 460 700">
<g fill="none" stroke-width="0.9" stroke="#111">
<path d="M219 514 V533.5 M250 514 V533.5 M219 516.5 H250"/>
<path d="M164 533.5 H219 M164 565.5 H181 M164 533.5 V565.5"/>
<path d="M146 577.5 H181 M146 633 H181 M146 577.5 V633"/>
<path d="M164 591 V626 M164 605 H224 M164 611 H220"/>
<path d="M181 633 V670 M267.5 633 V670 M181 667.5 H267.5"/>
<path d="M203 650 H249 M224.4 633 V652 M234.5 633 V652"/>
<path d="M181 565.5 L234.5 533.5 L267.5 565.5"/>
<path d="M181 577.5 L234.5 596.5 L267.5 577.5 M181 577.5 L220 611 L181 633 M267.5 577.5 L249 611 L267.5 633"/>
<path d="M181 633 Q234.5 620 267.5 633"/>
</g>
<g fill="#111" stroke="none">
<path d="M164 533.5 l-1.2 4 h2.4z M164 565.5 l-1.2 -4 h2.4z M146 577.5 l-1.2 4 h2.4z M146 633 l-1.2 -4 h2.4z M181 667.5 l4 -1.2 v2.4z M267.5 667.5 l-4 -1.2 v2.4z M219 516.5 l4 -1.2 v2.4z M250 516.5 l-4 -1.2 v2.4z"/>
</g>
<g fill="none" stroke="#1e7fff" stroke-width="1.6">
<path d="M181 565.5 L219.5 533.5 H250 L267.5 565.5 Z"/>
<rect x="181" y="577.5" width="86.5" height="55.5"/>
<circle cx="234.5" cy="611" r="14.2" stroke-width="1.3"/>
<circle cx="234.5" cy="611" r="11.8" stroke-width="1.3"/>
</g>
<g fill="none" stroke="#f08a1e" stroke-width="0.9">
<path d="M181 605 H271 M224.4 572.5 V633 M234.5 598 V624 M220 611 H250" stroke-dasharray="7 2"/>
</g>
<g font-family="Liberation Sans" font-style="italic" font-size="11" fill="#333">
<text x="230" y="511">D</text>
<text x="0" y="0" transform="translate(161,555) rotate(-90)">H</text>
<text x="0" y="0" transform="translate(143,611) rotate(-90)">B</text>
<text x="0" y="0" transform="translate(161,615) rotate(-90)">Y</text>
<text x="208" y="647">X</text>
<text x="217" y="663">A</text>
</g></svg>
<div style="position:absolute;left:69px;top:745px;width:375px;height:32px;background:#cbcbcb;"></div>
<svg style="position:absolute;left:205px;top:754px;" width="16" height="12" viewBox="0 0 16 12"><path d="M2.5 3 L8 8.8 L13.5 3" stroke="#2e2e2e" stroke-width="2" fill="none"/></svg>
<div class="t" style="left:224.40px;top:755.12px;font-size:14.5px;line-height:14.5px;color:#2a2a2a;transform:scaleX(1.0101);transform-origin:0 0;">Материал</div>
<div style="position:absolute;left:69px;top:777px;width:375px;height:2px;background:#f6f6f6;"></div>
<div style="position:absolute;left:69px;top:779px;width:375px;height:32px;background:#cbcbcb;"></div>
<svg style="position:absolute;left:205px;top:788px;" width="16" height="12" viewBox="0 0 16 12"><path d="M2.5 8.8 L8 3 L13.5 8.8" stroke="#2e2e2e" stroke-width="2" fill="none"/></svg>
<div class="t" style="left:224.40px;top:789.22px;font-size:14.5px;line-height:14.5px;color:#2a2a2a;transform:scaleX(1.0288);transform-origin:0 0;">Документы</div>
<div style="position:absolute;left:69px;top:924px;width:375px;height:32px;background:#cbcbcb;"></div>
<svg style="position:absolute;left:205px;top:933px;" width="16" height="12" viewBox="0 0 16 12"><path d="M2.5 8.8 L8 3 L13.5 8.8" stroke="#2e2e2e" stroke-width="2" fill="none"/></svg>
<div class="t" style="left:224.40px;top:933.82px;font-size:14.5px;line-height:14.5px;color:#2a2a2a;transform:scaleX(1.0133);transform-origin:0 0;">Оформление</div>
<svg style="position:absolute;left:223px;top:817px;" width="22" height="21" viewBox="0 0 22 21"><rect x="1.6" y="1.6" width="18.6" height="17.6" fill="#fff" stroke="#2e2e2e" stroke-width="1.3"/><path d="M5.3 10.3 L9 14.8 L16.2 5.8" stroke="#2e2e2e" stroke-width="2.5" fill="none"/></svg>
<div class="t" style="left:248.30px;top:821.32px;font-size:14.5px;line-height:14.5px;color:#222;transform:scaleX(1.0183);transform-origin:0 0;">Модель</div>
<svg style="position:absolute;left:223px;top:847px;" width="22" height="21" viewBox="0 0 22 21"><rect x="1.6" y="1.6" width="18.6" height="17.6" fill="#fff" stroke="#2e2e2e" stroke-width="1.3"/><path d="M5.3 10.3 L9 14.8 L16.2 5.8" stroke="#2e2e2e" stroke-width="2.5" fill="none"/></svg>
<div class="t" style="left:248.30px;top:851.32px;font-size:14.5px;line-height:14.5px;color:#222;transform:scaleX(1.0352);transform-origin:0 0;">Чертеж</div>
<svg style="position:absolute;left:223px;top:877px;" width="22" height="21" viewBox="0 0 22 21"><rect x="1.6" y="1.6" width="18.6" height="17.6" fill="#fff" stroke="#2e2e2e" stroke-width="1.3"/><path d="M5.3 10.3 L9 14.8 L16.2 5.8" stroke="#2e2e2e" stroke-width="2.5" fill="none"/></svg>
<div class="t" style="left:248.30px;top:881.32px;font-size:14.5px;line-height:14.5px;color:#222;transform:scaleX(0.9937);transform-origin:0 0;">Контур DXF</div>
<div style="position:absolute;left:224px;top:961px;width:178px;height:30px;background:#fff;border:1px solid #a9a9a9;box-sizing:border-box;"></div>
<div class="t" style="left:127.30px;top:966.95px;font-size:15.3px;line-height:15.3px;color:#484848;transform:scaleX(0.9386);transform-origin:0 0;">Обозначение:</div>
<div class="t" style="left:230.60px;top:969.23px;font-size:15.2px;line-height:15.2px;color:#1e1e1e;transform:scaleX(0.9288);transform-origin:0 0;">АСКО.2023.01</div>
<div style="position:absolute;left:224px;top:996px;width:178px;height:30px;background:#fff;border:1px solid #a9a9a9;box-sizing:border-box;"></div>
<div class="t" style="left:119.50px;top:1001.95px;font-size:15.3px;line-height:15.3px;color:#484848;transform:scaleX(0.9120);transform-origin:0 0;">Наименование:</div>
<div class="t" style="left:230.60px;top:1004.23px;font-size:15.2px;line-height:15.2px;color:#1e1e1e;transform:scaleX(1.0104);transform-origin:0 0;">Патрубок переходный</div>
<div style="position:absolute;left:224px;top:1031px;width:178px;height:30px;background:#e6e6e6;border:1px solid #a9a9a9;box-sizing:border-box;"></div>
<div class="t" style="left:166.70px;top:1036.95px;font-size:15.3px;line-height:15.3px;color:#484848;transform:scaleX(0.9113);transform-origin:0 0;">Формат:</div>
<div class="t" style="left:230.60px;top:1039.23px;font-size:15.2px;line-height:15.2px;color:#8a8a8a;transform:scaleX(0.9789);transform-origin:0 0;">А3</div>
<svg style="position:absolute;left:409px;top:1039px;" width="21" height="16" viewBox="0 0 21 16"><rect x="1.2" y="1.2" width="18" height="13" fill="none" stroke="#2e2e2e" stroke-width="1.6"/><rect x="10.5" y="7.5" width="8" height="6.5" fill="none" stroke="#2e2e2e" stroke-width="1.4"/></svg>
<div style="position:absolute;left:821px;top:122px;width:696px;height:33px;background:#f0f0f0;border:1px solid #707070;border-top:none;box-sizing:border-box;"></div>
<div style="position:absolute;left:822px;top:122px;width:19px;height:32px;background:#e3e3e3;"></div>
<div style="position:absolute;left:841px;top:122px;width:1px;height:32px;background:#6e6e6e;"></div>
<div style="position:absolute;left:877px;top:122px;width:1px;height:32px;background:#6e6e6e;"></div>
<div style="position:absolute;left:1033px;top:122px;width:1px;height:32px;background:#6e6e6e;"></div>
<div style="position:absolute;left:1129px;top:122px;width:1px;height:32px;background:#6e6e6e;"></div>
<div style="position:absolute;left:1251px;top:122px;width:1px;height:32px;background:#6e6e6e;"></div>
<div style="position:absolute;left:1355px;top:122px;width:1px;height:32px;background:#6e6e6e;"></div>
<div style="position:absolute;left:1416px;top:122px;width:1px;height:32px;background:#6e6e6e;"></div>
<div style="position:absolute;left:1034px;top:122px;width:33px;height:32px;background:#4b4b4b;"></div>
<div style="position:absolute;left:1130px;top:122px;width:59px;height:32px;background:#4b4b4b;"></div>
<div style="position:absolute;left:1252px;top:122px;width:33px;height:32px;background:#4b4b4b;"></div>
<div style="position:absolute;left:1357px;top:122px;width:58px;height:32px;background:#4b4b4b;"></div>
<svg style="position:absolute;left:825px;top:127.5px;" width="12" height="6" viewBox="0 0 12 6"><rect x="0" y="0" width="2" height="2" fill="#333"/><rect x="0" y="3.5" width="2" height="2" fill="#333"/><rect x="3.3" y="0" width="2" height="2" fill="#333"/><rect x="3.3" y="3.5" width="2" height="2" fill="#333"/><rect x="6.6" y="0" width="2" height="2" fill="#333"/><rect x="6.6" y="3.5" width="2" height="2" fill="#333"/><rect x="9.9" y="0" width="2" height="2" fill="#333"/><rect x="9.9" y="3.5" width="2" height="2" fill="#333"/></svg>
<svg style="position:absolute;left:846px;top:124px;" width="28" height="28" viewBox="0 0 28 28"><path d="M5 5.5 H13 V14.5 H21.5 V21.5 H5 Z" fill="none" stroke="#2e2e2e" stroke-width="1.2"/><circle cx="5" cy="5.5" r="1.6" fill="#f0f0f0" stroke="#2e2e2e" stroke-width="1"/><circle cx="13" cy="5.5" r="1.6" fill="#f0f0f0" stroke="#2e2e2e" stroke-width="1"/><circle cx="13" cy="14.5" r="1.6" fill="#f0f0f0" stroke="#2e2e2e" stroke-width="1"/><circle cx="21.5" cy="14.5" r="1.6" fill="#f0f0f0" stroke="#2e2e2e" stroke-width="1"/><circle cx="21.5" cy="21.5" r="1.6" fill="#f0f0f0" stroke="#2e2e2e" stroke-width="1"/><circle cx="5" cy="21.5" r="1.6" fill="#f0f0f0" stroke="#2e2e2e" stroke-width="1"/></svg>
<svg style="position:absolute;left:882px;top:124px;" width="30" height="28" viewBox="0 0 30 28"><circle cx="11" cy="11.2" r="6.6" fill="none" stroke="#2e2e2e" stroke-width="1.4"/><path d="M15.5 16 L21 21.5" stroke="#2e2e2e" stroke-width="2.6"/><path d="M11 6 H22 V15 H14.5 M11 6 V15" stroke="#2e2e2e" stroke-width="0.9" stroke-dasharray="1.3 1.3" fill="none"/></svg>
<svg style="position:absolute;left:919.5px;top:133.5px;" width="13" height="7" viewBox="0 0 13 7"><path d="M0.5 0.5 H12 L6.25 6.3 Z" fill="#2e2e2e"/></svg>
<svg style="position:absolute;left:942px;top:124px;" width="28" height="28" viewBox="0 0 28 28"><path d="M4 23 L9 17 H23 L18 23 Z" fill="#2e2e2e"/><path d="M10.5 10.5 H12.5 V20 H15.5 V10.5 H17.5 L14 6.5 Z" fill="#e8e8e8" stroke="#2e2e2e" stroke-width="1.2"/></svg>
<svg style="position:absolute;left:976px;top:124px;" width="28" height="28" viewBox="0 0 28 28"><path d="M13.5 15 V4 M13.5 15 H23.5 M11.5 17 L4 23" stroke="#2e2e2e" stroke-width="1.3" fill="none"/><path d="M11.5 3.5 L13.5 0.5 L15.5 3.5 Z M23 13 L26 15 L23 17 Z M3 24 L4 20.5 L6.8 23 Z" fill="#2e2e2e" stroke="#2e2e2e" stroke-width="1"/><rect x="11.5" y="13" width="4.5" height="4.5" fill="#fff" stroke="#2e2e2e" stroke-width="1.2"/></svg>
<svg style="position:absolute;left:1011.5px;top:133.5px;" width="13" height="7" viewBox="0 0 13 7"><path d="M0.5 0.5 H12 L6.25 6.3 Z" fill="#2e2e2e"/></svg>
<svg style="position:absolute;left:1038px;top:124px;" width="27" height="27" viewBox="0 0 27 27"><path d="M5 7 L13.5 3 L22.5 7 V19.5 L13 24 L5 19.5 Z" fill="#fff"/><path d="M5 8 L13 12 L22.5 8 M13 12 V24" stroke="#4b4b4b" stroke-width="0.9" fill="none"/></svg>
<svg style="position:absolute;left:1072px;top:124px;" width="26" height="27" viewBox="0 0 26 27"><path d="M3 7.5 L11.5 3 L20.5 7.5 V19 L11.5 23.5 L3 19 Z M3 7.5 L11.5 11.5 L20.5 7.5 M11.5 11.5 V23.5 M11.5 3 V15 M3 19 L11.5 15 L20.5 19" stroke="#2e2e2e" stroke-width="1" fill="none"/></svg>
<svg style="position:absolute;left:1108.5px;top:133.5px;" width="13" height="7" viewBox="0 0 13 7"><path d="M0.5 0.5 H12 L6.25 6.3 Z" fill="#2e2e2e"/></svg>
<svg style="position:absolute;left:1134px;top:124px;" width="28" height="28" viewBox="0 0 28 28"><path d="M3 12 Q13 2 23 12 Q13 22 3 12 Z" fill="#fff"/><circle cx="13" cy="12" r="3.8" fill="#4b4b4b"/><circle cx="13" cy="12" r="2" fill="#fff"/><path d="M6 2 L21 21" stroke="#4b4b4b" stroke-width="2.2"/><path d="M6 2.5 L21 21.5" stroke="#fff" stroke-width="0.9"/></svg>
<svg style="position:absolute;left:1170.5px;top:133.5px;" width="13" height="7" viewBox="0 0 13 7"><path d="M0.5 0.5 H12 L6.25 6.3 Z" fill="#fff"/></svg>
<svg style="position:absolute;left:1193px;top:124px;" width="28" height="28" viewBox="0 0 28 28"><rect x="2.5" y="3.5" width="20.5" height="13.5" fill="#2e2e2e"/><path d="M3 10.5 Q13 2 23 10.5 Q13 19 3 10.5 Z" fill="#fff"/><circle cx="13" cy="10.5" r="3.2" fill="#2e2e2e"/><circle cx="13" cy="10.5" r="1.6" fill="#fff"/><path d="M2 0.5 L22.5 21" stroke="#2e2e2e" stroke-width="1.4"/></svg>
<svg style="position:absolute;left:1230.5px;top:133.5px;" width="13" height="7" viewBox="0 0 13 7"><path d="M0.5 0.5 H12 L6.25 6.3 Z" fill="#2e2e2e"/></svg>
<svg style="position:absolute;left:1256px;top:124px;" width="26" height="28" viewBox="0 0 26 28"><path d="M6 20 L20 11" stroke="#fff" stroke-width="1.3"/><circle cx="6" cy="20.5" r="2.5" fill="#4b4b4b" stroke="#fff" stroke-width="1.3"/><circle cx="20.5" cy="10.5" r="2.5" fill="#4b4b4b" stroke="#fff" stroke-width="1.3"/><path d="M8 8 L11 11 L8 14 L5 11 Z M17.5 17.5 L20.5 20.5 L17.5 23.5 L14.5 20.5 Z" fill="#fff"/><path d="M8 6 V16 M3 11 H13 M17.5 15.5 V25.5 M12.5 20.5 H22.5" stroke="#fff" stroke-width="0.8"/></svg>
<svg style="position:absolute;left:1285px;top:122px;" width="70" height="32" viewBox="0 0 70 32"><path d="M9.1 11.2 V23.7 H13" stroke="#2e2e2e" stroke-width="1.4" fill="none"/><path d="M8.4 10.6 Q8 6 12.5 5.5" stroke="#2e2e2e" stroke-width="1.1" fill="none"/><path d="M8.4 10.6 L13.9 5.5 H22.2 L16.8 11.7 H9.1 Z" fill="#2e2e2e"/><path d="M16.8 11.7 L22.2 5.5 V12 L16.8 18.2 Z" fill="#8a8a8a"/><path d="M18.2 10.5 V16.5 M19.8 8.7 V14.7" stroke="#e8e8e8" stroke-width="0.7"/><path d="M9.6 13.5 L15.5 21.5" stroke="#2e2e2e" stroke-width="1.2"/><path d="M13.5 21.5 L15.5 19.5 L17 22.5 Z" fill="#2e2e2e"/><path d="M17.1 17.9 L21.5 13.5 H27.3 L23.3 18.6 H17.1 Z" fill="#2e2e2e"/><path d="M23.3 18.6 L27.3 13.5 V19 L23.3 24 Z" fill="#8a8a8a"/><path d="M24.6 17.5 V22.3 M26 15.8 V20.5" stroke="#e8e8e8" stroke-width="0.7"/><path d="M16.8 18.6 V23.9 H23.3 V18.6" stroke="#2e2e2e" stroke-width="1.1" fill="none"/><path d="M13 23.9 H23.5" stroke="#2e2e2e" stroke-width="1"/></svg>
<svg style="position:absolute;left:1285px;top:122px;" width="70" height="32" viewBox="0 0 70 32"><path d="M41.6 10.9 L44.9 13.5 V22 H52.5 L56.1 25.5 H41.6 Z" fill="#2e2e2e"/><path d="M47 14.5 L49.5 16 V19.3 H53 L55 21.2 H47 Z" fill="#2e2e2e"/><path d="M42 10.5 L47 5.5 L61.5 20.5 L56.5 25.2 M44.5 8 L59 22.8 M47 5.5 V8.5" stroke="#2e2e2e" stroke-width="1.2" stroke-dasharray="1.3 1.1" fill="none"/></svg>
<svg style="position:absolute;left:1360px;top:124px;" width="26" height="28" viewBox="0 0 26 28"><path d="M3 4 H22 Q22 7 15 14 Q14 17 14 23 H11 Q11 17 10 14 Q3 7 3 4 Z" fill="#fff"/></svg>
<svg style="position:absolute;left:1395.5px;top:133.5px;" width="13" height="7" viewBox="0 0 13 7"><path d="M0.5 0.5 H12 L6.25 6.3 Z" fill="#fff"/></svg>
<svg style="position:absolute;left:1423px;top:124px;" width="26" height="28" viewBox="0 0 26 28"><path d="M17 4 Q21 2 22.5 5 Q23.5 8 20 10 L18 12 L14 8 Z" fill="#cfcfcf"/><path d="M15 9 L5 21 L3.5 23 L6 21.5 L17 11.5" stroke="#cfcfcf" stroke-width="2" fill="none"/></svg>
<svg style="position:absolute;left:1456px;top:124.5px;" width="24" height="24" viewBox="0 0 24 24"><path d="M2.5 12 L9 19.5 L21 3" stroke="#1f9e6c" stroke-width="3.04" fill="none" stroke-linejoin="miter"/></svg>
<svg style="position:absolute;left:1489px;top:127px;" width="22" height="22" viewBox="0 0 22 22"><path d="M2 2 L20 20 M20 2 L2 20" stroke="#f24848" stroke-width="3.1" stroke-linecap="butt"/></svg>
<svg style="position:absolute;left:0px;top:0px;" width="600" height="1070" viewBox="0 0 600 1070">
<g>
<path d="M527.5 1003 L526 969" stroke="#5b8fd8" stroke-width="4.5" stroke-linecap="round"/>
<path d="M521 975 L526.5 962 L532 975 Z" fill="#6aa6ee"/>
<circle cx="526.5" cy="975.5" r="2.2" fill="#3d86e6"/>
<path d="M522 1006 L485 1014" stroke="#f27b7b" stroke-width="4.5" stroke-linecap="round"/>
<path d="M474.5 1018 L489 1009.5 L491.5 1018 Z" fill="#f8a0a0"/>
<path d="M533 1008 L543 1030" stroke="#5fbf60" stroke-width="4.5" stroke-linecap="round"/>
<path d="M538.5 1029 L546.5 1042 L547 1029 Z" fill="#7fd07f"/>
<circle cx="542.5" cy="1031" r="2.2" fill="#46b046"/>
<circle cx="531" cy="1004.5" r="7" fill="#f4f08a"/>
<circle cx="533" cy="1009" r="2.4" fill="#3faa3f"/>
<circle cx="530" cy="999" r="2.2" fill="#4d86d0"/>
</g>
<g font-family="Liberation Serif" font-size="13" >
<text x="522" y="961" fill="#5b9ef0">Z</text>
<text x="461" y="1025" fill="#f05050">X</text>
<text x="543" y="1053" fill="#50c050">Y</text>
</g></svg>
<svg style="position:absolute;left:0px;top:0px;pointer-events:none;" width="1920" height="1080" viewBox="0 0 1920 1080"><polygon points="706.00,639.00 948.70,308.20 950.18,306.22 951.70,304.26 953.26,302.31 954.86,300.37 956.50,298.44 958.18,296.53 959.90,294.63 961.67,292.75 963.47,290.88 965.31,289.03 967.19,287.19 969.11,285.37 971.07,283.57 973.07,281.78 975.11,280.00 977.18,278.25 979.29,276.51 981.44,274.79 983.62,273.08 985.85,271.40 988.10,269.73 990.40,268.08 992.72,266.45 995.09,264.83 997.49,263.24 999.92,261.67 1002.38,260.11 1004.88,258.58 1007.41,257.07 1009.98,255.57 1012.58,254.10 1015.21,252.65 1017.87,251.22 1020.56,249.81 1023.28,248.42 1026.03,247.05 1028.81,245.71 1031.62,244.39 1034.46,243.09 1037.33,241.81 1040.22,240.56 1043.14,239.33 1046.09,238.12 1049.07,236.94 1052.07,235.78 1055.10,234.64 1058.15,233.53 1061.23,232.44 1064.33,231.38 1067.45,230.34 1070.60,229.33 1073.77,228.34 1076.96,227.37 1080.17,226.43 1083.41,225.52 1086.66,224.63 1089.93,223.77 1093.23,222.93 1096.54,222.12 1099.87,221.34 1103.22,220.58 1106.59,219.85 1109.97,219.14 1113.37,218.46 1116.78,217.81 1120.21,217.18 1123.65,216.58 1127.11,216.01 1130.58,215.46 1134.07,214.95 1137.56,214.45 1141.07,213.99 1144.59,213.55 1148.12,213.14 1151.66,212.76 1155.21,212.41 1158.77,212.08 1162.34,211.78 1165.91,211.51 1169.50,211.27 1173.08,211.05 1176.68,210.86 1180.28,210.70 1183.89,210.57 1187.50,210.47 1191.11,210.39 1194.73,210.34 1198.34,210.32 1201.97,210.33 1205.59,210.36 1209.21,210.43 1212.84,210.52 1216.46,210.64 1220.08,210.78 1223.70,210.96 1227.32,211.16 1230.94,211.39 1234.55,211.65 1238.16,211.93 1241.77,212.25 1245.37,212.59 1248.97,212.96 1252.56,213.35 1256.14,213.78 1259.71,214.23 1263.28,214.71 1266.84,215.21 1270.39,215.74 1273.93,216.30 1277.46,216.89 1280.98,217.50 1284.49,218.14 1287.99,218.81 1291.47,219.50 1294.95,220.22 1298.40,220.97 1301.85,221.74 1305.28,222.54 1308.69,223.36 1312.09,224.21 1315.48,225.09 1318.84,225.99 1322.19,226.92 1325.52,227.87 1328.84,228.85 1332.13,229.85 1335.41,230.88 1338.66,231.93 1341.90,233.00 1345.11,234.10 1348.30,235.23 1351.48,236.38 1354.62,237.55 1357.75,238.75 1360.85,239.96 1363.93,241.21 1366.98,242.47 1370.01,243.76 1373.01,245.07 1375.99,246.40 1378.94,247.76 1381.86,249.14 1384.76,250.54 1387.63,251.96 1390.47,253.40 1393.28,254.86 1396.07,256.34 1398.82,257.85 1401.54,259.37 1404.23,260.92 1406.90,262.48 1409.53,264.06 1412.12,265.67 1414.69,267.29 1417.23,268.93 1419.73,270.59 1422.19,272.27 1424.63,273.96 1427.03,275.68 1429.39,277.41 1431.72,279.15 1434.02,280.92 1436.28,282.70 1438.50,284.50 1440.69,286.31 1442.84,288.14 1444.95,289.99 1447.03,291.85 1449.06,293.72 1451.06,295.61 1453.02,297.52 1454.95,299.44 1456.83,301.37 1458.68,303.31 1460.48,305.27 1462.25,307.24 1463.97,309.23 1465.65,311.22 1467.30,313.23 1468.90,315.25 1470.46,317.28 1471.98,319.32 1473.46,321.37 1474.90,323.43 1476.29,325.50 1477.64,327.58 1478.95,329.67 1480.22,331.77 1481.44,333.88 1482.62,335.99 1483.76,338.12 1484.85,340.25 1485.90,342.39 1486.90,344.53 1487.86,346.68 1488.78,348.84 1489.65,351.00 1490.48,353.17 1491.26,355.34 1492.00,357.52 1653.00,848.00 907.00,1040.00" fill="#5a5a5a"/></svg>
<div style="position:absolute;left:0;top:0;width:1920px;height:1080px;clip-path:polygon(706.0px 639.0px,948.7px 308.2px,947.3px 310.1px,946.0px 312.1px,944.6px 314.0px,943.4px 316.0px,942.1px 318.0px,941.0px 319.9px,939.8px 321.9px,938.7px 323.9px,937.6px 325.9px,936.6px 328.0px,935.6px 330.0px,934.7px 332.0px,933.8px 334.1px,932.9px 336.1px,932.1px 338.2px,931.3px 340.2px,930.6px 342.3px,929.9px 344.4px,929.2px 346.5px,928.6px 348.6px,928.1px 350.7px,927.5px 352.8px,927.1px 354.9px,926.6px 357.0px,926.2px 359.1px,925.9px 361.2px,925.6px 363.3px,925.3px 365.5px,925.1px 367.6px,924.9px 369.7px,924.8px 371.9px,924.7px 374.0px,924.6px 376.1px,924.6px 378.3px,924.6px 380.4px,924.7px 382.5px,924.8px 384.7px,925.0px 386.8px,925.2px 389.0px,925.5px 391.1px,925.7px 393.2px,926.1px 395.4px,926.5px 397.5px,926.9px 399.7px,927.3px 401.8px,927.9px 403.9px,928.4px 406.0px,929.0px 408.2px,929.6px 410.3px,930.3px 412.4px,931.0px 414.5px,931.8px 416.6px,932.6px 418.7px,933.4px 420.8px,934.3px 422.9px,935.3px 425.0px,936.2px 427.1px,937.2px 429.1px,938.3px 431.2px,939.4px 433.3px,940.5px 435.3px,941.7px 437.4px,942.9px 439.4px,944.2px 441.4px,945.5px 443.5px,946.8px 445.5px,948.2px 447.5px,949.6px 449.5px,951.0px 451.4px,952.5px 453.4px,954.1px 455.4px,955.6px 457.3px,957.3px 459.3px,958.9px 461.2px,960.6px 463.1px,962.3px 465.0px,964.1px 466.9px,965.9px 468.8px,967.7px 470.7px,969.6px 472.5px,971.5px 474.4px,973.4px 476.2px,975.4px 478.0px,977.4px 479.8px,979.5px 481.6px,981.6px 483.4px,983.7px 485.2px,985.8px 486.9px,988.0px 488.6px,990.2px 490.3px,992.5px 492.0px,994.8px 493.7px,997.1px 495.4px,999.5px 497.0px,1001.8px 498.7px,1004.3px 500.3px,1006.7px 501.9px,1009.2px 503.5px,1011.7px 505.0px,1014.2px 506.6px,1016.8px 508.1px,1019.4px 509.6px,1022.0px 511.1px,1024.7px 512.5px,1027.4px 514.0px,1030.1px 515.4px,1032.8px 516.8px,1035.6px 518.2px,1038.4px 519.6px,1041.2px 520.9px,1044.0px 522.3px,1046.9px 523.6px,1049.8px 524.9px,1052.7px 526.1px,1055.6px 527.4px,1058.6px 528.6px,1061.6px 529.8px,1064.6px 531.0px,1067.6px 532.2px,1070.7px 533.3px,907.0px 1040.0px);background:conic-gradient(from -40deg at 907px 1040px,rgb(162,162,162) 10.00deg,rgb(162,162,162) 45.00deg,rgb(165,165,165) 52.00deg,rgb(169,169,169) 58.10deg,rgb(169,169,169) 60.00deg);"></div>
<div style="position:absolute;left:0;top:0;width:1920px;height:1080px;clip-path:polygon(706.0px 639.0px,948.7px 308.2px,947.3px 310.1px,946.0px 312.1px,944.6px 314.0px,943.4px 316.0px,942.1px 318.0px,941.0px 319.9px,939.8px 321.9px,938.7px 323.9px,937.6px 325.9px,936.6px 328.0px,935.6px 330.0px,934.7px 332.0px,933.8px 334.1px,932.9px 336.1px,932.1px 338.2px,931.3px 340.2px,930.6px 342.3px,929.9px 344.4px,929.2px 346.5px,928.6px 348.6px,928.1px 350.7px,927.5px 352.8px,927.1px 354.9px,926.6px 357.0px,926.2px 359.1px,925.9px 361.2px,925.6px 363.3px,925.3px 365.5px,925.1px 367.6px,924.9px 369.7px,924.8px 371.9px,924.7px 374.0px,924.6px 376.1px,924.6px 378.3px,924.6px 380.4px,924.7px 382.5px,924.8px 384.7px,925.0px 386.8px,925.2px 389.0px,925.5px 391.1px,925.7px 393.2px,926.1px 395.4px,926.5px 397.5px,926.9px 399.7px,927.3px 401.8px,927.9px 403.9px,928.4px 406.0px,929.0px 408.2px,929.6px 410.3px,930.3px 412.4px,931.0px 414.5px,931.8px 416.6px,932.6px 418.7px,933.4px 420.8px,934.3px 422.9px,935.3px 425.0px,936.2px 427.1px,937.2px 429.1px,938.3px 431.2px,939.4px 433.3px,940.5px 435.3px,941.7px 437.4px,942.9px 439.4px,944.2px 441.4px,945.5px 443.5px,946.8px 445.5px,948.2px 447.5px,949.6px 449.5px,951.0px 451.4px,952.5px 453.4px,954.1px 455.4px,955.6px 457.3px,957.3px 459.3px,958.9px 461.2px,960.6px 463.1px,962.3px 465.0px,964.1px 466.9px,965.9px 468.8px,967.7px 470.7px,969.6px 472.5px,971.5px 474.4px,973.4px 476.2px,975.4px 478.0px,977.4px 479.8px,979.5px 481.6px,981.6px 483.4px,983.7px 485.2px,985.8px 486.9px,988.0px 488.6px,990.2px 490.3px,992.5px 492.0px,994.8px 493.7px,997.1px 495.4px,999.5px 497.0px,1001.8px 498.7px,1004.3px 500.3px,1006.7px 501.9px,1009.2px 503.5px,1011.7px 505.0px,1014.2px 506.6px,1016.8px 508.1px,1019.4px 509.6px,1022.0px 511.1px,1024.7px 512.5px,1027.4px 514.0px,1030.1px 515.4px,1032.8px 516.8px,1035.6px 518.2px,1038.4px 519.6px,1041.2px 520.9px,1044.0px 522.3px,1046.9px 523.6px,1049.8px 524.9px,1052.7px 526.1px,1055.6px 527.4px,1058.6px 528.6px,1061.6px 529.8px,1064.6px 531.0px,1067.6px 532.2px,1070.7px 533.3px,907.0px 1040.0px);background:conic-gradient(from -40deg at 907px 1040px,rgb(162,162,162) 10.00deg,rgb(162,162,162) 45.00deg,rgb(165,165,165) 50.00deg,rgb(170,170,170) 54.00deg,rgb(177,177,177) 56.00deg,rgb(183,183,183) 57.30deg,rgb(187,187,187) 58.10deg,rgb(187,187,187) 60.00deg);-webkit-mask-image:radial-gradient(circle 545px at 907px 1040px, rgba(0,0,0,0) 0px, rgba(0,0,0,1) 545px);mask-image:radial-gradient(circle 545px at 907px 1040px, rgba(0,0,0,0) 0px, rgba(0,0,0,1) 545px);"></div>
<div style="position:absolute;left:0;top:0;width:1920px;height:1080px;clip-path:polygon(1070.7px 533.3px,1073.7px 534.4px,1076.8px 535.5px,1079.8px 536.5px,1082.9px 537.6px,1086.0px 538.6px,1089.2px 539.6px,1092.3px 540.5px,1095.5px 541.5px,1098.7px 542.4px,1101.9px 543.3px,1105.1px 544.2px,1108.3px 545.0px,1111.5px 545.8px,1114.8px 546.6px,1118.1px 547.4px,1121.4px 548.2px,1124.7px 548.9px,1128.0px 549.6px,1131.3px 550.3px,1134.6px 551.0px,1138.0px 551.6px,1141.4px 552.2px,1144.7px 552.8px,1148.1px 553.4px,1151.5px 553.9px,1154.9px 554.4px,1158.3px 554.9px,1161.7px 555.4px,1165.1px 555.8px,1168.5px 556.2px,1172.0px 556.6px,1175.4px 557.0px,1178.9px 557.3px,1182.3px 557.6px,1185.8px 557.9px,1189.2px 558.2px,1192.7px 558.4px,1196.1px 558.6px,1199.6px 558.8px,1203.1px 559.0px,1206.5px 559.1px,1210.0px 559.2px,1213.5px 559.3px,1216.9px 559.3px,1220.4px 559.4px,1223.9px 559.4px,1227.3px 559.4px,1230.8px 559.3px,1234.3px 559.2px,1237.7px 559.1px,1241.2px 559.0px,1244.6px 558.9px,1248.1px 558.7px,1251.5px 558.5px,1254.9px 558.3px,1258.4px 558.0px,1261.8px 557.8px,1265.2px 557.5px,1268.6px 557.1px,1272.0px 556.8px,1275.4px 556.4px,1278.7px 556.0px,1282.1px 555.6px,1285.5px 555.1px,1288.8px 554.7px,1292.1px 554.2px,1295.5px 553.6px,1298.8px 553.1px,1302.1px 552.5px,1305.3px 551.9px,1308.6px 551.3px,1311.9px 550.6px,1315.1px 550.0px,1318.3px 549.3px,1321.5px 548.6px,1324.7px 547.8px,1327.9px 547.0px,1331.1px 546.2px,1334.2px 545.4px,1337.3px 544.6px,1340.4px 543.7px,1343.5px 542.8px,1346.6px 541.9px,1349.6px 541.0px,1352.7px 540.0px,1355.7px 539.1px,1358.6px 538.1px,1361.6px 537.0px,1364.6px 536.0px,1367.5px 534.9px,1370.4px 533.8px,1373.2px 532.7px,1376.1px 531.6px,1378.9px 530.4px,1381.7px 529.3px,1384.5px 528.1px,1387.2px 526.9px,1390.0px 525.6px,1392.6px 524.4px,1395.3px 523.1px,1398.0px 521.8px,1400.6px 520.5px,1403.2px 519.1px,1405.7px 517.8px,1408.3px 516.4px,1410.8px 515.0px,1413.2px 513.6px,1415.7px 512.1px,1418.1px 510.7px,1420.5px 509.2px,1422.8px 507.7px,1425.1px 506.2px,1427.4px 504.7px,1429.7px 503.1px,1431.9px 501.6px,1434.1px 500.0px,1436.3px 498.4px,1438.4px 496.8px,1440.5px 495.1px,1442.6px 493.5px,1444.6px 491.8px,1446.6px 490.2px,1448.5px 488.5px,1450.5px 486.8px,1452.4px 485.0px,1454.2px 483.3px,1456.0px 481.6px,1457.8px 479.8px,1459.6px 478.0px,1461.3px 476.2px,1462.9px 474.4px,1464.6px 472.6px,1466.2px 470.8px,1467.7px 468.9px,1469.3px 467.1px,1470.7px 465.2px,1472.2px 463.3px,1473.6px 461.4px,1475.0px 459.5px,1476.3px 457.6px,1477.6px 455.7px,1478.9px 453.7px,1480.1px 451.8px,1481.3px 449.8px,1482.4px 447.9px,1483.5px 445.9px,1484.5px 443.9px,1485.6px 441.9px,1486.5px 439.9px,1487.5px 437.9px,1653.0px 848.0px,907.0px 1040.0px);background:conic-gradient(from -40deg at 907px 1040px,rgb(100,100,100) 57.00deg,rgb(100,100,100) 85.00deg,rgb(90,90,90) 98.00deg,rgb(90,90,90) 160.00deg);"></div>
<div style="position:absolute;left:0;top:0;width:1920px;height:1080px;clip-path:polygon(1070.7px 533.3px,1073.7px 534.4px,1076.8px 535.5px,1079.8px 536.5px,1082.9px 537.6px,1086.0px 538.6px,1089.2px 539.6px,1092.3px 540.5px,1095.5px 541.5px,1098.7px 542.4px,1101.9px 543.3px,1105.1px 544.2px,1108.3px 545.0px,1111.5px 545.8px,1114.8px 546.6px,1118.1px 547.4px,1121.4px 548.2px,1124.7px 548.9px,1128.0px 549.6px,1131.3px 550.3px,1134.6px 551.0px,1138.0px 551.6px,1141.4px 552.2px,1144.7px 552.8px,1148.1px 553.4px,1151.5px 553.9px,1154.9px 554.4px,1158.3px 554.9px,1161.7px 555.4px,1165.1px 555.8px,1168.5px 556.2px,1172.0px 556.6px,1175.4px 557.0px,1178.9px 557.3px,1182.3px 557.6px,1185.8px 557.9px,1189.2px 558.2px,1192.7px 558.4px,1196.1px 558.6px,1199.6px 558.8px,1203.1px 559.0px,1206.5px 559.1px,1210.0px 559.2px,1213.5px 559.3px,1216.9px 559.3px,1220.4px 559.4px,1223.9px 559.4px,1227.3px 559.4px,1230.8px 559.3px,1234.3px 559.2px,1237.7px 559.1px,1241.2px 559.0px,1244.6px 558.9px,1248.1px 558.7px,1251.5px 558.5px,1254.9px 558.3px,1258.4px 558.0px,1261.8px 557.8px,1265.2px 557.5px,1268.6px 557.1px,1272.0px 556.8px,1275.4px 556.4px,1278.7px 556.0px,1282.1px 555.6px,1285.5px 555.1px,1288.8px 554.7px,1292.1px 554.2px,1295.5px 553.6px,1298.8px 553.1px,1302.1px 552.5px,1305.3px 551.9px,1308.6px 551.3px,1311.9px 550.6px,1315.1px 550.0px,1318.3px 549.3px,1321.5px 548.6px,1324.7px 547.8px,1327.9px 547.0px,1331.1px 546.2px,1334.2px 545.4px,1337.3px 544.6px,1340.4px 543.7px,1343.5px 542.8px,1346.6px 541.9px,1349.6px 541.0px,1352.7px 540.0px,1355.7px 539.1px,1358.6px 538.1px,1361.6px 537.0px,1364.6px 536.0px,1367.5px 534.9px,1370.4px 533.8px,1373.2px 532.7px,1376.1px 531.6px,1378.9px 530.4px,1381.7px 529.3px,1384.5px 528.1px,1387.2px 526.9px,1390.0px 525.6px,1392.6px 524.4px,1395.3px 523.1px,1398.0px 521.8px,1400.6px 520.5px,1403.2px 519.1px,1405.7px 517.8px,1408.3px 516.4px,1410.8px 515.0px,1413.2px 513.6px,1415.7px 512.1px,1418.1px 510.7px,1420.5px 509.2px,1422.8px 507.7px,1425.1px 506.2px,1427.4px 504.7px,1429.7px 503.1px,1431.9px 501.6px,1434.1px 500.0px,1436.3px 498.4px,1438.4px 496.8px,1440.5px 495.1px,1442.6px 493.5px,1444.6px 491.8px,1446.6px 490.2px,1448.5px 488.5px,1450.5px 486.8px,1452.4px 485.0px,1454.2px 483.3px,1456.0px 481.6px,1457.8px 479.8px,1459.6px 478.0px,1461.3px 476.2px,1462.9px 474.4px,1464.6px 472.6px,1466.2px 470.8px,1467.7px 468.9px,1469.3px 467.1px,1470.7px 465.2px,1472.2px 463.3px,1473.6px 461.4px,1475.0px 459.5px,1476.3px 457.6px,1477.6px 455.7px,1478.9px 453.7px,1480.1px 451.8px,1481.3px 449.8px,1482.4px 447.9px,1483.5px 445.9px,1484.5px 443.9px,1485.6px 441.9px,1486.5px 439.9px,1487.5px 437.9px,1653.0px 848.0px,907.0px 1040.0px);background:conic-gradient(from -40deg at 907px 1040px,rgb(182,182,182) 57.00deg,rgb(182,182,182) 58.10deg,rgb(166,166,166) 60.20deg,rgb(139,139,139) 65.40deg,rgb(123,123,123) 70.20deg,rgb(110,110,110) 74.50deg,rgb(98,98,98) 78.40deg,rgb(92,92,92) 83.00deg,rgb(90,90,90) 88.00deg,rgb(90,90,90) 160.00deg);-webkit-mask-image:radial-gradient(circle 545px at 907px 1040px, rgba(0,0,0,0) 0px, rgba(0,0,0,1) 545px);mask-image:radial-gradient(circle 545px at 907px 1040px, rgba(0,0,0,0) 0px, rgba(0,0,0,1) 545px);"></div>
<svg style="position:absolute;left:0px;top:0px;pointer-events:none;" width="1920" height="1080" viewBox="0 0 1920 1080">
<defs>
<linearGradient id="gInner" gradientUnits="userSpaceOnUse" x1="1345" y1="0" x2="1495" y2="0">
<stop offset="0" stop-color="#5d5d5d"/><stop offset="1" stop-color="#808080"/>
</linearGradient>
</defs>
<polygon points="1497.56,396.35 1497.28,400.91 1496.80,405.45 1496.13,409.98 1495.26,414.50 1494.20,418.99 1492.94,423.46 1491.49,427.90 1489.85,432.31 1488.01,436.69 1485.99,441.04 1483.78,445.34 1481.38,449.61 1478.79,453.83 1476.03,458.00 1473.08,462.12 1469.95,466.19 1466.64,470.21 1463.16,474.16 1459.51,478.06 1455.69,481.89 1451.69,485.65 1447.54,489.35 1443.22,492.97 1438.74,496.52 1434.11,499.99 1429.32,503.39 1424.39,506.70 1419.31,509.93 1414.08,513.07 1408.72,516.13 1403.22,519.09 1397.59,521.97 1391.83,524.75 1385.95,527.43 1379.94,530.02 1373.83,532.50 1367.60,534.89 1361.26,537.17 1354.82,539.35 1348.28,541.42 1341.65,543.39 1334.93,545.24 1328.12,546.99 1321.24,548.62 1314.27,550.15 1307.24,551.56 1300.14,552.85 1292.98,554.03 1285.77,555.10 1278.50,556.04 1271.19,556.87 1263.83,557.59 1256.44,558.18 1249.02,558.66 1241.57,559.01 1234.10,559.25 1226.62,559.37 1219.13,559.36 1211.63,559.24 1204.13,559.00 1196.63,558.64 1189.14,558.16 1181.67,557.56 1174.22,556.84 1166.80,556.01 1159.40,555.06 1152.04,553.99 1144.72,552.80 1137.45,551.50 1130.23,550.09 1123.06,548.56 1115.95,546.92 1108.91,545.17 1101.94,543.31 1095.04,541.34 1088.22,539.26 1081.49,537.08 1074.85,534.80 1068.30,532.41 1061.84,529.92 1055.49,527.33 1049.25,524.64 1043.11,521.85 1037.10,518.98 1031.20,516.01 1025.42,512.95 1019.77,509.80 1014.26,506.57 1008.87,503.25 1003.63,499.86 998.53,496.38 993.57,492.83 988.77,489.20 984.11,485.51 979.61,481.74 975.27,477.91 971.10,474.01 967.08,470.05 963.24,466.03 959.56,461.96 956.05,457.84 952.73,453.66 949.57,449.44 946.60,445.17 943.81,440.87 941.20,436.52 938.78,432.14 936.54,427.72 934.49,423.28 932.63,418.81 930.96,414.32 929.49,409.80 928.20,405.27 927.11,400.73 926.22,396.17 925.52,391.61 925.02,387.04 924.71,382.48 924.60,377.91 924.68,373.35 924.96,368.79 925.44,364.25 926.11,359.72 926.98,355.20 928.04,350.71 929.30,346.24 930.75,341.80 932.39,337.39 934.23,333.01 936.25,328.66 938.46,324.36 940.86,320.09 943.45,315.87 946.21,311.70 949.16,307.58 952.29,303.51 955.60,299.49 959.08,295.54 962.73,291.64 966.55,287.81 970.55,284.05 974.70,280.35 979.02,276.73 983.50,273.18 988.13,269.71 992.92,266.31 997.85,263.00 1002.93,259.77 1008.16,256.63 1013.52,253.57 1019.02,250.61 1024.65,247.73 1030.41,244.95 1036.29,242.27 1042.30,239.68 1048.41,237.20 1054.64,234.81 1060.98,232.53 1067.42,230.35 1073.96,228.28 1080.59,226.31 1087.31,224.46 1094.12,222.71 1101.00,221.08 1107.97,219.55 1115.00,218.14 1122.10,216.85 1129.26,215.67 1136.47,214.60 1143.74,213.66 1151.05,212.83 1158.41,212.11 1165.80,211.52 1173.22,211.04 1180.67,210.69 1188.14,210.45 1195.62,210.33 1203.11,210.34 1210.61,210.46 1218.11,210.70 1225.61,211.06 1233.10,211.54 1240.57,212.14 1248.02,212.86 1255.44,213.69 1262.84,214.64 1270.20,215.71 1277.52,216.90 1284.79,218.20 1292.01,219.61 1299.18,221.14 1306.29,222.78 1313.33,224.53 1320.30,226.39 1327.20,228.36 1334.02,230.44 1340.75,232.62 1347.39,234.90 1353.94,237.29 1360.40,239.78 1366.75,242.37 1372.99,245.06 1379.13,247.85 1385.14,250.72 1391.04,253.69 1396.82,256.75 1402.47,259.90 1407.98,263.13 1413.37,266.45 1418.61,269.84 1423.71,273.32 1428.67,276.87 1433.47,280.50 1438.13,284.19 1442.63,287.96 1446.97,291.79 1451.14,295.69 1455.16,299.65 1459.00,303.67 1462.68,307.74 1466.19,311.86 1469.51,316.04 1472.67,320.26 1475.64,324.53 1478.43,328.83 1481.04,333.18 1483.46,337.56 1485.70,341.98 1487.75,346.42 1489.61,350.89 1491.28,355.38 1492.75,359.90 1494.04,364.43 1495.13,368.97 1496.02,373.53 1496.72,378.09 1497.22,382.66 1497.53,387.22 1497.64,391.79 1497.56,396.35" fill="#5a5a5a"/>
<polygon points="1339.76,232.29 1398.00,478.00 1420.74,509.03 1424.33,506.74 1427.85,504.40 1431.28,502.02 1434.65,499.60 1437.94,497.14 1441.14,494.64 1444.27,492.10 1447.32,489.53 1450.29,486.92 1453.18,484.28 1455.98,481.60 1458.70,478.89 1461.33,476.15 1463.88,473.37 1466.34,470.56 1468.71,467.73 1470.99,464.87 1473.19,461.97 1475.29,459.06 1477.31,456.11 1479.23,453.15 1481.06,450.15 1482.79,447.14 1484.43,444.10 1485.98,441.05 1487.44,437.97 1488.79,434.88 1490.06,431.77 1491.23,428.64 1492.30,425.50 1493.27,422.35 1494.15,419.18 1494.93,416.00 1495.61,412.80 1496.19,409.60 1496.68,406.39 1497.06,403.18 1497.35,399.95 1497.54,396.73 1497.64,393.49 1497.63,390.26 1497.52,387.02 1497.32,383.78 1497.02,380.55 1496.62,377.31 1496.12,374.08 1495.52,370.85 1494.82,367.62 1494.03,364.40 1493.14,361.19 1492.15,357.99 1491.07,354.79 1489.89,351.61 1488.61,348.43 1487.24,345.27 1485.77,342.13 1484.21,338.99 1482.56,335.88 1480.81,332.78 1478.97,329.70 1477.03,326.63 1475.01,323.59 1472.89,320.57 1470.68,317.57 1468.39,314.60 1466.00,311.64 1463.53,308.72 1460.97,305.82 1458.33,302.94 1455.60,300.10 1452.78,297.28 1449.89,294.50 1446.91,291.74 1443.85,289.02 1440.71,286.33 1437.49,283.67 1434.19,281.05 1430.81,278.47 1427.36,275.92 1423.84,273.41 1420.24,270.94 1416.57,268.50 1412.83,266.11 1409.02,263.76 1405.14,261.45 1401.20,259.18 1397.19,256.95 1393.11,254.77 1388.98,252.63 1384.78,250.54 1380.52,248.50 1376.20,246.50 1371.83,244.55 1367.40,242.65 1362.92,240.80 1358.39,238.99 1353.80,237.24 1349.17,235.54 1344.48,233.89 1339.76,232.29" fill="url(#gInner)"/>
<polygon points="1109.76,545.39 1398.00,478.00 1420.74,509.03 1417.83,510.83 1414.88,512.60 1411.88,514.35 1408.84,516.06 1405.75,517.75 1402.62,519.40 1399.45,521.03 1396.24,522.63 1392.99,524.20 1389.70,525.74 1386.37,527.24 1383.00,528.72 1379.59,530.16 1376.15,531.58 1372.67,532.96 1369.15,534.31 1365.60,535.62 1362.02,536.90 1358.40,538.15 1354.76,539.37 1351.08,540.55 1347.37,541.70 1343.63,542.81 1339.86,543.89 1336.06,544.94 1332.24,545.95 1328.39,546.92 1324.51,547.86 1320.61,548.77 1316.68,549.63 1312.74,550.46 1308.77,551.26 1304.78,552.02 1300.76,552.74 1296.73,553.43 1292.68,554.08 1288.61,554.69 1284.53,555.27 1280.43,555.80 1276.31,556.30 1272.18,556.77 1268.04,557.19 1263.88,557.58 1259.71,557.93 1255.54,558.24 1251.35,558.52 1247.15,558.76 1242.95,558.95 1238.74,559.12 1234.52,559.24 1230.30,559.32 1226.07,559.37 1221.84,559.38 1217.61,559.35 1213.37,559.28 1209.14,559.17 1204.90,559.03 1200.67,558.85 1196.44,558.63 1192.21,558.37 1187.99,558.07 1183.77,557.74 1179.56,557.37 1175.36,556.96 1171.16,556.51 1166.97,556.03 1162.79,555.51 1158.62,554.95 1154.47,554.35 1150.32,553.72 1146.19,553.05 1142.07,552.34 1137.97,551.60 1133.89,550.82 1129.82,550.00 1125.77,549.15 1121.73,548.26 1117.72,547.34 1113.73,546.38 1109.76,545.39" fill="#ffffff"/>
<g fill="none" stroke="#111" stroke-width="1.1">
<polyline points="948.70,308.20 706.00,639.00 907.00,1040.00 1653.00,848.00 1492.00,357.52" stroke-width="1.35"/>
<polygon points="1497.56,396.35 1497.28,400.91 1496.80,405.45 1496.13,409.98 1495.26,414.50 1494.20,418.99 1492.94,423.46 1491.49,427.90 1489.85,432.31 1488.01,436.69 1485.99,441.04 1483.78,445.34 1481.38,449.61 1478.79,453.83 1476.03,458.00 1473.08,462.12 1469.95,466.19 1466.64,470.21 1463.16,474.16 1459.51,478.06 1455.69,481.89 1451.69,485.65 1447.54,489.35 1443.22,492.97 1438.74,496.52 1434.11,499.99 1429.32,503.39 1424.39,506.70 1419.31,509.93 1414.08,513.07 1408.72,516.13 1403.22,519.09 1397.59,521.97 1391.83,524.75 1385.95,527.43 1379.94,530.02 1373.83,532.50 1367.60,534.89 1361.26,537.17 1354.82,539.35 1348.28,541.42 1341.65,543.39 1334.93,545.24 1328.12,546.99 1321.24,548.62 1314.27,550.15 1307.24,551.56 1300.14,552.85 1292.98,554.03 1285.77,555.10 1278.50,556.04 1271.19,556.87 1263.83,557.59 1256.44,558.18 1249.02,558.66 1241.57,559.01 1234.10,559.25 1226.62,559.37 1219.13,559.36 1211.63,559.24 1204.13,559.00 1196.63,558.64 1189.14,558.16 1181.67,557.56 1174.22,556.84 1166.80,556.01 1159.40,555.06 1152.04,553.99 1144.72,552.80 1137.45,551.50 1130.23,550.09 1123.06,548.56 1115.95,546.92 1108.91,545.17 1101.94,543.31 1095.04,541.34 1088.22,539.26 1081.49,537.08 1074.85,534.80 1068.30,532.41 1061.84,529.92 1055.49,527.33 1049.25,524.64 1043.11,521.85 1037.10,518.98 1031.20,516.01 1025.42,512.95 1019.77,509.80 1014.26,506.57 1008.87,503.25 1003.63,499.86 998.53,496.38 993.57,492.83 988.77,489.20 984.11,485.51 979.61,481.74 975.27,477.91 971.10,474.01 967.08,470.05 963.24,466.03 959.56,461.96 956.05,457.84 952.73,453.66 949.57,449.44 946.60,445.17 943.81,440.87 941.20,436.52 938.78,432.14 936.54,427.72 934.49,423.28 932.63,418.81 930.96,414.32 929.49,409.80 928.20,405.27 927.11,400.73 926.22,396.17 925.52,391.61 925.02,387.04 924.71,382.48 924.60,377.91 924.68,373.35 924.96,368.79 925.44,364.25 926.11,359.72 926.98,355.20 928.04,350.71 929.30,346.24 930.75,341.80 932.39,337.39 934.23,333.01 936.25,328.66 938.46,324.36 940.86,320.09 943.45,315.87 946.21,311.70 949.16,307.58 952.29,303.51 955.60,299.49 959.08,295.54 962.73,291.64 966.55,287.81 970.55,284.05 974.70,280.35 979.02,276.73 983.50,273.18 988.13,269.71 992.92,266.31 997.85,263.00 1002.93,259.77 1008.16,256.63 1013.52,253.57 1019.02,250.61 1024.65,247.73 1030.41,244.95 1036.29,242.27 1042.30,239.68 1048.41,237.20 1054.64,234.81 1060.98,232.53 1067.42,230.35 1073.96,228.28 1080.59,226.31 1087.31,224.46 1094.12,222.71 1101.00,221.08 1107.97,219.55 1115.00,218.14 1122.10,216.85 1129.26,215.67 1136.47,214.60 1143.74,213.66 1151.05,212.83 1158.41,212.11 1165.80,211.52 1173.22,211.04 1180.67,210.69 1188.14,210.45 1195.62,210.33 1203.11,210.34 1210.61,210.46 1218.11,210.70 1225.61,211.06 1233.10,211.54 1240.57,212.14 1248.02,212.86 1255.44,213.69 1262.84,214.64 1270.20,215.71 1277.52,216.90 1284.79,218.20 1292.01,219.61 1299.18,221.14 1306.29,222.78 1313.33,224.53 1320.30,226.39 1327.20,228.36 1334.02,230.44 1340.75,232.62 1347.39,234.90 1353.94,237.29 1360.40,239.78 1366.75,242.37 1372.99,245.06 1379.13,247.85 1385.14,250.72 1391.04,253.69 1396.82,256.75 1402.47,259.90 1407.98,263.13 1413.37,266.45 1418.61,269.84 1423.71,273.32 1428.67,276.87 1433.47,280.50 1438.13,284.19 1442.63,287.96 1446.97,291.79 1451.14,295.69 1455.16,299.65 1459.00,303.67 1462.68,307.74 1466.19,311.86 1469.51,316.04 1472.67,320.26 1475.64,324.53 1478.43,328.83 1481.04,333.18 1483.46,337.56 1485.70,341.98 1487.75,346.42 1489.61,350.89 1491.28,355.38 1492.75,359.90 1494.04,364.43 1495.13,368.97 1496.02,373.53 1496.72,378.09 1497.22,382.66 1497.53,387.22 1497.64,391.79 1497.56,396.35" stroke-width="1.3"/>
<polyline points="950.70,309.11 949.32,311.02 947.98,312.93 946.68,314.86 945.42,316.80 944.20,318.74 943.02,320.70 941.88,322.66 940.78,324.64 939.72,326.63 938.70,328.62 937.72,330.62 936.78,332.63 935.89,334.65 935.03,336.67 934.22,338.71 933.45,340.75 932.72,342.79 932.03,344.85 931.39,346.90 930.79,348.97 930.23,351.04 929.71,353.11 929.23,355.19 928.80,357.28 928.40,359.36 928.05,361.46 927.75,363.55 927.48,365.65 927.26,367.75 927.08,369.86 926.95,371.96 926.86,374.07 926.81,376.18 926.80,378.29 926.83,380.41 926.91,382.52 927.03,384.63 927.19,386.75 927.40,388.86 927.65,390.97 927.94,393.08 928.27,395.19 928.65,397.30 929.07,399.41 929.53,401.51 930.04,403.62 930.58,405.71 931.17,407.81 931.80,409.90 932.47,411.99 933.19,414.08 933.94,416.16 934.74,418.23 935.58,420.30 936.46,422.37 937.38,424.43 938.35,426.48 939.35,428.53 940.39,430.57 941.48,432.61 942.61,434.63 943.77,436.65 944.98,438.67 946.23,440.67 947.51,442.66 948.84,444.65 950.21,446.63 951.61,448.60 953.06,450.55 954.54,452.50 956.06,454.44 957.62,456.37 959.22,458.29 960.85,460.19 962.53,462.09 964.24,463.97 965.99,465.84 967.77,467.70 969.59,469.55 971.45,471.38 973.35,473.21 975.28,475.01 977.24,476.81 979.24,478.59 981.28,480.35 983.35,482.11 985.45,483.84 987.59,485.57 989.76,487.27 991.97,488.96 994.20,490.64 996.47,492.30 998.78,493.95 1001.11,495.57 1003.48,497.18 1005.87,498.78 1008.30,500.36 1010.76,501.92 1013.25,503.46 1015.77,504.98 1018.32,506.49 1020.90,507.98 1023.50,509.45 1026.14,510.90 1028.80,512.33 1031.49,513.74 1034.20,515.13 1036.95,516.51 1039.71,517.86 1042.51,519.19 1045.33,520.51 1048.17,521.80 1051.04,523.07 1053.94,524.32 1056.86,525.56 1059.80,526.77 1062.76,527.95 1065.74,529.12 1068.75,530.27 1071.78,531.39" stroke-width="0.8"/>
<polyline points="1071.78,531.39 1073.03,531.84 1074.28,532.29 1075.53,532.74 1076.79,533.18 1078.05,533.62 1079.31,534.05 1080.58,534.49 1081.85,534.91 1083.12,535.34 1084.40,535.76 1085.68,536.17 1086.96,536.59 1088.25,536.99 1089.54,537.40 1090.83,537.80 1092.13,538.20 1093.43,538.59 1094.73,538.98 1096.03,539.36 1097.34,539.74 1098.65,540.12 1099.96,540.50 1101.28,540.87 1102.60,541.23 1103.92,541.59 1105.24,541.95 1106.57,542.30 1107.90,542.65 1109.23,543.00 1110.57,543.34" stroke-width="0.8"/>
<polyline points="1419.16,507.51 1421.44,506.06 1423.70,504.60 1425.92,503.12 1428.12,501.63 1430.28,500.12 1432.41,498.59 1434.51,497.05 1436.58,495.49 1438.62,493.91 1440.63,492.32 1442.60,490.72 1444.55,489.10 1446.46,487.46 1448.33,485.81 1450.17,484.15 1451.98,482.47 1453.76,480.78 1455.50,479.07 1457.21,477.36 1458.88,475.63 1460.51,473.88 1462.12,472.12 1463.68,470.36 1465.21,468.58 1466.71,466.78 1468.17,464.98 1469.59,463.16 1470.98,461.34 1472.33,459.50 1473.64,457.65 1474.92,455.80 1476.16,453.93 1477.36,452.05 1478.53,450.16 1479.65,448.27 1480.74,446.36 1481.79,444.45 1482.81,442.53 1483.78,440.60 1484.72,438.66 1485.62,436.71 1486.48,434.76 1487.30,432.80 1488.08,430.83 1488.82,428.86 1489.53,426.88 1490.19,424.89 1490.82,422.90 1491.40,420.91 1491.95,418.91 1492.46,416.90 1492.93,414.89 1493.35,412.88 1493.74,410.86 1494.09,408.83 1494.40,406.81 1494.67,404.78 1494.90,402.75 1495.09,400.71 1495.24,398.68 1495.35,396.64 1495.41,394.60 1495.44,392.56 1495.43,390.51 1495.38,388.47 1495.29,386.43 1495.16,384.38 1494.99,382.34 1494.78,380.30 1494.53,378.25 1494.24,376.21 1493.91,374.17 1493.54,372.13 1493.13,370.09 1492.68,368.06 1492.19,366.02 1491.66,363.99 1491.09,361.97 1490.49,359.94 1489.84,357.92" stroke-width="0.8"/>
<polyline points="1109.76,545.39 1398.00,478.00 1420.74,509.03"/>
<line x1="1072.9" y1="533.8" x2="908.0" y2="1039.5" stroke="#c4c4c4" stroke-width="2.4"/>
<line x1="1070.7" y1="533.3" x2="907.0" y2="1040.0" stroke-width="0.9"/>
<line x1="1075.2" y1="534.3" x2="909.0" y2="1039.0" stroke-width="0.9"/>
<line x1="1487.5" y1="437.9" x2="1653.0" y2="848.0" stroke-width="0.9"/>
<line x1="1490.5" y1="433.9" x2="1653.5" y2="844.0" stroke-width="0.9"/>
<line x1="1339.8" y1="232.3" x2="1398.0" y2="478.0" stroke-width="0.9"/>
<line x1="1343.8" y1="232.3" x2="1400.0" y2="476.0" stroke-width="0.9"/>
<line x1="1471.8" y1="319.1" x2="1488" y2="437.5" stroke-width="0.9"/>
</g>
<g stroke="#111" stroke-width="1.3" fill="none">
<path d="M1168.5 733 V748.5 M1159 743.5 L1177.7 738.5 M1164.5 735 L1172 746.5"/>
</g>
</svg>
</body></html>
